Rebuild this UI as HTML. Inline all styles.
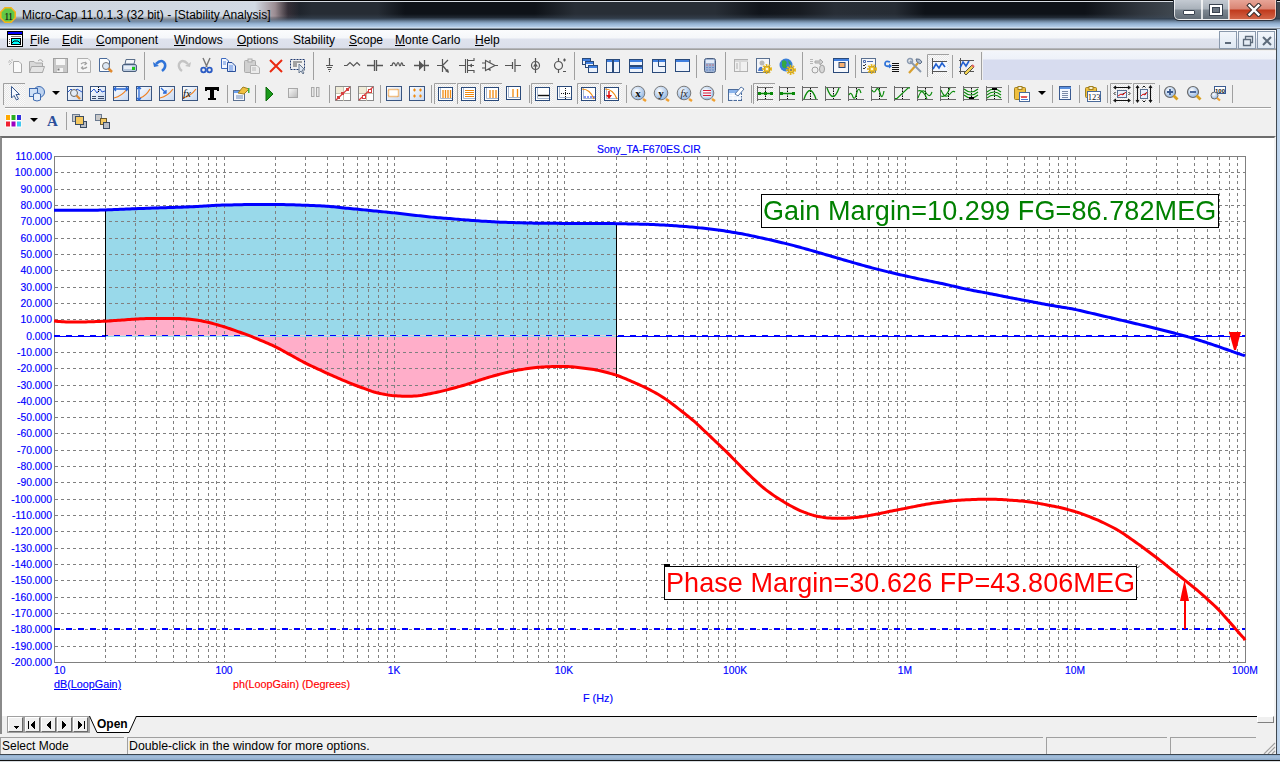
<!DOCTYPE html><html><head><meta charset="utf-8"><style>
*{margin:0;padding:0;box-sizing:border-box}
html,body{width:1280px;height:762px;overflow:hidden;background:#f0f0f0;font-family:"Liberation Sans",sans-serif;position:relative}
.t{position:absolute;white-space:pre;line-height:1}
.b{-webkit-text-stroke:0.15px currentColor}
</style></head><body>
<div style="position:absolute;left:0;top:0;width:1280px;height:30px;background:linear-gradient(#000 0,#000 1px,#d8dde4 1px,#d8dde4 2px,#1e232a 2px,#13171d 12px,#10141a 17px,#5a7088 21px,#a9c3de 25px,#b9d1ea 27px,#e8f0f8 28px,#2a3440 29px,#2a3440 30px)"></div>
<div style="position:absolute;left:0;top:2px;width:1280px;height:16px;background:linear-gradient(90deg,#141820 280px,#262c34 312px,#262c34 378px,#0e1218 405px,#0e1218 535px,#282e36 575px,#282e36 715px,#10141a 760px,#181c22 800px,#282e36 835px,#262c34 895px,#0e1218 925px,#0e1218 1085px,#30363e 1140px,#404850 1175px)"></div>
<div style="position:absolute;left:0;top:14px;width:1280px;height:14px;background:linear-gradient(rgba(30,35,42,0) 0,rgba(60,75,92,0.6) 5px,rgba(150,180,212,1) 10px,#b5cde8 13px,#dce8f4 14px)"></div>
<div style="position:absolute;left:0;top:2px;width:300px;height:20px;background:linear-gradient(90deg,rgba(204,212,222,1) 0,rgba(210,218,228,1) 255px,rgba(190,170,175,0.8) 275px,rgba(120,90,100,0.3) 288px,rgba(60,60,70,0) 300px);-webkit-mask-image:linear-gradient(#000 0,#000 14px,rgba(0,0,0,0) 20px)"></div>
<svg width="17" height="17" style="position:absolute;left:0;top:7px"><polygon points="5,0.8 11,0.8 15.2,5 15.2,11 11,15.2 5,15.2 0.8,11 0.8,5" fill="#62c846" stroke="#f4b41c" stroke-width="1.6"/><text x="8" y="12.5" font-family="Liberation Serif" font-size="11" text-anchor="middle" fill="#111" letter-spacing="-1.2">11</text></svg>
<div class="t" style="left:22px;top:9px;font-size:12px;color:#000">Micro-Cap 11.0.1.3 (32 bit) - [Stability Analysis]</div>
<div style="position:absolute;left:1173px;top:0;width:104px;height:21px;border:1px solid #2c3440;border-top:none;border-radius:0 0 6px 6px;background:#2c3440"></div>
<div style="position:absolute;left:1174px;top:0;width:28px;height:20px;border:1px solid rgba(255,255,255,0.75);border-top:none;border-radius:0 0 0 5px;background:linear-gradient(#c4cad2 0,#a9b1ba 9px,#7d8791 10px,#5f6973 20px)"></div>
<div style="position:absolute;left:1202px;top:0;width:27px;height:20px;border:1px solid rgba(255,255,255,0.75);border-top:none;background:linear-gradient(#c4cad2 0,#a9b1ba 9px,#7d8791 10px,#5f6973 20px)"></div>
<div style="position:absolute;left:1229px;top:0;width:47px;height:20px;border:1px solid rgba(255,220,210,0.75);border-top:none;border-radius:0 0 5px 0;background:linear-gradient(#e7a597 0,#d98473 9px,#c0391c 10px,#d4694c 20px)"></div>
<div style="position:absolute;left:1183px;top:10px;width:12px;height:5px;background:#fff;border:1px solid #3a4350;border-radius:1px"></div>
<div style="position:absolute;left:1210px;top:5px;width:12px;height:10px;border:2px solid #fff;border-top-width:2px;box-shadow:0 0 0 1px #3a4350, inset 0 0 0 1px #3a4350;background:#6a7480"></div>
<svg width="16" height="14" style="position:absolute;left:1246px;top:3px"><path d="M3.5,2.5 L12.5,11.5 M12.5,2.5 L3.5,11.5" stroke="#3a3030" stroke-width="4.5" stroke-linecap="square"/><path d="M3.5,2.5 L12.5,11.5 M12.5,2.5 L3.5,11.5" stroke="#fff" stroke-width="2.4" stroke-linecap="square"/></svg>
<div style="position:absolute;left:0;top:30px;width:1277px;height:19px;background:linear-gradient(#fbfcfd 0,#f5f7fa 8px,#dfe3ee 9px,#dadeea 19px)"></div>
<div style="position:absolute;left:0;top:48px;width:1277px;height:2px;background:linear-gradient(#c6c9d2 0,#a0a0a0 1px)"></div>
<div style="position:absolute;left:1276px;top:29px;width:4px;height:733px;background:linear-gradient(90deg,#404850 0,#404850 1px,#b8d0ea 1px,#c6daf0)"></div>
<svg width="17" height="17" style="position:absolute;left:7px;top:31px" shape-rendering="crispEdges"><rect x="0" y="0" width="16" height="16" fill="#000"/><rect x="1" y="1" width="14" height="2" fill="#0000ff"/><rect x="1" y="4" width="14" height="11" fill="#fff"/><rect x="4" y="5" width="10" height="1" fill="#777"/><rect x="2" y="8" width="1" height="1" fill="#555"/><rect x="2" y="10" width="1" height="1" fill="#555"/><rect x="2" y="12" width="1" height="1" fill="#555"/><rect x="4" y="7" width="10" height="7" fill="#000"/><rect x="5" y="8" width="8" height="5" fill="#00ffff"/><path d="M5,12 L7,10 H11 L13,12" stroke="#000" fill="none" shape-rendering="auto"/></svg>
<div class="t" style="left:30px;top:34px;font-size:12px;color:#000"><span style="text-decoration:underline">F</span>ile</div>
<div class="t" style="left:62px;top:34px;font-size:12px;color:#000"><span style="text-decoration:underline">E</span>dit</div>
<div class="t" style="left:96px;top:34px;font-size:12px;color:#000"><span style="text-decoration:underline">C</span>omponent</div>
<div class="t" style="left:174px;top:34px;font-size:12px;color:#000"><span style="text-decoration:underline">W</span>indows</div>
<div class="t" style="left:237px;top:34px;font-size:12px;color:#000"><span style="text-decoration:underline">O</span>ptions</div>
<div class="t" style="left:293px;top:34px;font-size:12px;color:#000">Stability</div>
<div class="t" style="left:349px;top:34px;font-size:12px;color:#000"><span style="text-decoration:underline">S</span>cope</div>
<div class="t" style="left:395px;top:34px;font-size:12px;color:#000"><span style="text-decoration:underline">M</span>onte Carlo</div>
<div class="t" style="left:475px;top:34px;font-size:12px;color:#000"><span style="text-decoration:underline">H</span>elp</div>
<div style="position:absolute;left:1219px;top:31px;width:18px;height:18px;border:1px solid #8a99ac;background:linear-gradient(#f2f6fb,#dfe8f3)"></div>
<div style="position:absolute;left:1238px;top:31px;width:18px;height:18px;border:1px solid #8a99ac;background:linear-gradient(#f2f6fb,#dfe8f3)"></div>
<div style="position:absolute;left:1257px;top:31px;width:18px;height:18px;border:1px solid #8a99ac;background:linear-gradient(#f2f6fb,#dfe8f3)"></div>
<div style="position:absolute;left:1225px;top:42px;width:6px;height:2px;background:#5c6a7a"></div>
<svg width="12" height="12" style="position:absolute;left:1242px;top:35px"><path d="M3.5,4.5 V1.5 H10.5 V7.5 H8 M1.5,4.5 H8.5 V10.5 H1.5 Z" stroke="#5c6a7a" stroke-width="1.3" fill="none"/></svg>
<svg width="12" height="12" style="position:absolute;left:1261px;top:35px"><path d="M2,2 L10,10 M10,2 L2,10" stroke="#5c6a7a" stroke-width="2"/></svg>
<div style="position:absolute;left:983px;top:51px;width:293px;height:29px;background:linear-gradient(#f3f5fb 0,#eef1f9 8px,#d7dcef 9px,#d7dcef 29px)"></div>
<div style="position:absolute;left:5px;top:107px;width:1266px;height:2px;background:linear-gradient(#a0a0a0 0,#a0a0a0 1px,#fff 1px)"></div>
<svg width="1280" height="136" style="position:absolute;left:0;top:0"><defs>
<pattern id="chk" width="2" height="2" patternUnits="userSpaceOnUse"><rect width="2" height="2" fill="#fafafa"/><rect width="1" height="1" fill="#e8e8e8"/><rect x="1" y="1" width="1" height="1" fill="#e8e8e8"/></pattern>
<linearGradient id="gb" x1="0" y1="0" x2="1" y2="1"><stop offset="0" stop-color="#ffffff"/><stop offset="1" stop-color="#c8d8f0"/></linearGradient>
<linearGradient id="gray" x1="0" y1="0" x2="1" y2="1"><stop offset="0" stop-color="#fafafa"/><stop offset="1" stop-color="#b8b8b8"/></linearGradient>
<radialGradient id="rg" cx="0.4" cy="0.35" r="0.7"><stop offset="0" stop-color="#ffffff"/><stop offset="1" stop-color="#8ab0e0"/></radialGradient>
</defs><g transform="translate(8,58)"><path d="M5.5,3.5 H11 L13.5,6 V14.5 H5.5 Z" fill="#fafafa" stroke="#a8a8a8"/><path d="M1,2 L4,5 M4,1 L4,3 M0,4 H2 M1,7 L3,5" stroke="#c0c0c0"/></g>
<g transform="translate(29,58)"><path d="M0.5,3.5 H5 L6.5,5 H13.5 V14.5 H0.5 Z" fill="#d8d8d8" stroke="#a8a8a8"/><path d="M2.5,8.5 H15.5 L13.5,14.5 H0.5 Z" fill="#e4e4e4" stroke="#a8a8a8"/><path d="M9,3 Q12,0 14,4" stroke="#a8a8a8" fill="none"/></g>
<g transform="translate(53,58)"><rect x="0.5" y="0.5" width="14" height="14" fill="#c8c8c8" stroke="#a0a0a0"/><rect x="3" y="1" width="9" height="6" fill="#f6f6f6"/><rect x="4" y="10" width="6" height="4" fill="#f4f4f4"/><rect x="4.5" y="10.5" width="2" height="2" fill="#777"/></g>
<g transform="translate(77,58)"><path d="M0.5,0.5 H11 L13.5,3 V14.5 H0.5 Z" fill="#f6f6f6" stroke="#b0b0b0"/><path d="M4,6 Q6,4 9,5 M8,4 L9.5,5.5 L7.5,7 M10,9 Q8,11 5,10 M6,8.5 L4.5,10 L6.5,11.5" stroke="#a0a0a0" fill="none" stroke-width="1.2"/></g>
<g transform="translate(99,58)"><path d="M0.5,0.5 H8 L10.5,3 V13.5 H0.5 Z" fill="#fbfdff" stroke="#4a6a9a"/><circle cx="7" cy="8" r="3.5" fill="#dce8f6" stroke="#777"/><path d="M9.5,10.5 L13,14" stroke="#e08a30" stroke-width="2.5"/></g>
<g transform="translate(122,58)"><path d="M4,1.5 H13 L12,6 H3 Z" fill="#f4f6fa" stroke="#5a6e8a"/><rect x="0.5" y="6.5" width="14" height="7" rx="1.5" fill="#b9c9de" stroke="#4b5f7d"/><rect x="2" y="8" width="8" height="3" fill="#e8eef6"/><rect x="10" y="9" width="3" height="3" fill="#1bc51b"/></g>
<rect x="144" y="52" width="1" height="28" fill="#a0a0a0"/>
<g transform="translate(153,58)"><path d="M3,6 Q9,0 12,6 Q13,10 9,13" stroke="#2f73d8" stroke-width="2.6" fill="none"/><path d="M0,4 L1,9 L6,8 Z" fill="#2f73d8"/></g>
<g transform="translate(177,58)"><path d="M11,6 Q5,0 2,6 Q1,10 5,13" stroke="#c4c4c4" stroke-width="2.4" fill="none"/><path d="M14,4 L13,9 L8,8 Z" fill="#c4c4c4"/></g>
<g transform="translate(200,58)"><path d="M3,0 L7,9 M10,0 L6,9" stroke="#777" stroke-width="1.4"/><circle cx="3.5" cy="12" r="2.3" fill="none" stroke="#2a5bc4" stroke-width="1.8"/><circle cx="9.5" cy="12" r="2.3" fill="none" stroke="#2a5bc4" stroke-width="1.8"/></g>
<g transform="translate(221,58)"><path d="M0.5,0.5 H5 L7.5,3 V10.5 H0.5 Z" fill="#f2f6ff" stroke="#3c6ac0"/><path d="M6.5,4.5 H11 L14.5,8 V13.5 H6.5 Z" fill="#dfe9fb" stroke="#2a4f9a"/><path d="M2,4 H5 M2,6 H5 M8,8 H12 M8,10 H12 M8,12 H12" stroke="#5b8ae0"/></g>
<g transform="translate(244,58)"><rect x="0.5" y="2.5" width="11" height="12" rx="1" fill="#d0d0d0" stroke="#ababab"/><rect x="4" y="1" width="4" height="3" fill="#e8e8e8" stroke="#ababab"/><path d="M6.5,7.5 H13 L15.5,10 V15.5 H6.5 Z" fill="#ececec" stroke="#b0b0b0"/><path d="M8,10 H12 M8,12 H12" stroke="#b8b8b8"/></g>
<g transform="translate(269,58)"><path d="M1,2 L13,14 M13,2 L1,14" stroke="#ea2a10" stroke-width="2"/></g>
<g transform="translate(290,58)"><rect x="0.5" y="1.5" width="14" height="10" fill="none" stroke="#203a70" stroke-dasharray="2 1"/><path d="M3,4 H12 M3,6 H7 M3,8 H7" stroke="#555"/><path d="M9,6 L9,15 L11,13 L13,16 L14,15 L12,12 L15,12 Z" fill="#dfe7f3" stroke="#6a7a90"/></g>
<rect x="313" y="52" width="1" height="28" fill="#a0a0a0"/>
<g transform="translate(326,58)"><path d="M3.5,0 V7 M0,7.5 H7 M1,9.5 H6 M2,11.5 H5 M3,13.5 H4" stroke="#555" stroke-width="1.2"/></g>
<g transform="translate(344,58)"><path d="M0,7.5 H3 L6,4.5 L9.5,8 L13,4.5 L16,7.5" stroke="#555" stroke-width="1.2" fill="none"/></g>
<g transform="translate(367,58)"><path d="M0,7.5 H7 M10,7.5 H16 M7.5,2 V13 M9.5,2 V13" stroke="#555" stroke-width="1.3"/></g>
<g transform="translate(390,58)"><path d="M0,7.5 H2 Q3,3 5,6 Q6,10 7,6 Q8,3 9,6 Q10,10 11,6 Q12,3 13,7.5 H15" stroke="#555" stroke-width="1.2" fill="none"/></g>
<g transform="translate(414,58)"><path d="M0,7.5 H15 M10.5,2 V13" stroke="#555" stroke-width="1.3"/><path d="M5,2.5 L10,7.5 L5,12.5 Z" fill="#555"/></g>
<g transform="translate(437,58)"><path d="M0,7.5 H5 M5.5,1 V14 M6,7 L11,2 M6,8 L11,14" stroke="#555" stroke-width="1.2"/><path d="M8,13 L12,15 L11,11 Z" fill="#555"/></g>
<g transform="translate(459,58)"><path d="M0,7.5 H6 M6.5,1 V15 M8.5,1 V15 M9,2.5 H15 V0 M9,7.5 H15 M9,12.5 H15 V15" stroke="#555" stroke-width="1.1" fill="none"/><path d="M10,7.5 L13,5.5 L13,9.5 Z" fill="#555"/></g>
<g transform="translate(482,58)"><path d="M3.5,2.5 V12.5 L13,7.5 Z M0,5 H3 M0,10 H3 M8,2 V5 M8,10 V13 M13,7.5 H16" stroke="#555" stroke-width="1.1" fill="none"/></g>
<g transform="translate(505,58)"><path d="M0,7.5 H7 M10,7.5 H16 M7.5,4 V11 M10,1 V14" stroke="#555" stroke-width="1.2"/></g>
<g transform="translate(531,58)"><circle cx="4.5" cy="7.5" r="4" fill="none" stroke="#555" stroke-width="1.2"/><path d="M4.5,0 V15" stroke="#555" stroke-width="1.2"/><path d="M2,8.5 L4.5,5 L7,8.5 Z" fill="#555"/></g>
<g transform="translate(554,58)"><circle cx="4.5" cy="7.5" r="4" fill="none" stroke="#555" stroke-width="1.2"/><path d="M4.5,0 V3 M4.5,12 V15 M9,2 H12 M10.5,0.5 V3.5 M9,13.5 H12" stroke="#555" stroke-width="1.2"/></g>
<rect x="574" y="52" width="1" height="28" fill="#a0a0a0"/>
<g transform="translate(582,58)"><rect x="0.5" y="0.5" width="8" height="6" fill="#eef3fb" stroke="#2a4a7a"/><rect x="1" y="1" width="7" height="2" fill="#3f7fe0"/><rect x="3.5" y="3.5" width="8" height="6" fill="#eef3fb" stroke="#2a4a7a"/><rect x="4" y="4" width="7" height="2" fill="#3f7fe0"/><rect x="6.5" y="7.5" width="9" height="7" fill="#eef3fb" stroke="#2a4a7a"/><rect x="7" y="8" width="8" height="2" fill="#3f7fe0"/></g>
<g transform="translate(606,58)"><rect x="0.5" y="1.5" width="6" height="13" fill="#eef3fb" stroke="#2a4a7a"/><rect x="1" y="2" width="5" height="2" fill="#3f7fe0"/><rect x="7.5" y="1.5" width="6" height="13" fill="#eef3fb" stroke="#2a4a7a"/><rect x="8" y="2" width="5" height="2" fill="#3f7fe0"/></g>
<g transform="translate(629,58)"><rect x="0.5" y="1.5" width="13" height="6" fill="#eef3fb" stroke="#2a4a7a"/><rect x="1" y="2" width="12" height="2" fill="#3f7fe0"/><rect x="0.5" y="8.5" width="13" height="6" fill="#eef3fb" stroke="#2a4a7a"/><rect x="1" y="9" width="12" height="2" fill="#3f7fe0"/></g>
<g transform="translate(652,58)"><rect x="0.5" y="1.5" width="13" height="13" fill="#eef3fb" stroke="#2a4a7a"/><rect x="1" y="2" width="12" height="2" fill="#3f7fe0"/><path d="M6.5,1 V8.5 H13.5" stroke="#2a4a7a" fill="none"/><rect x="7" y="2" width="6" height="2" fill="#3f7fe0"/></g>
<g transform="translate(675,58)"><rect x="0.5" y="1.5" width="14" height="12" fill="#eef3fb" stroke="#2a4a7a"/><rect x="1" y="2" width="13" height="2" fill="#3f7fe0"/></g>
<rect x="696" y="55" width="1" height="23" fill="#a0a0a0"/>
<g transform="translate(704,58)"><rect x="0.5" y="0.5" width="11" height="14" rx="2" fill="#9fb4d4" stroke="#4a5e80"/><rect x="2" y="2" width="8" height="3" fill="#e4ecf8"/><path d="M2.5,7 h1 m2,0 h1 m2,0 h1" stroke="#d03030"/><path d="M2.5,9.5 h1 m2,0 h1 m2,0 h1 M2.5,12 h1 m2,0 h1 m2,0 h1" stroke="#3a66c4"/></g>
<rect x="725" y="52" width="1" height="28" fill="#a0a0a0"/>
<g transform="translate(734,58)"><rect x="0.5" y="1.5" width="13" height="12" fill="#f0f0f0" stroke="#b0b0b0"/><rect x="1" y="2" width="13" height="2" fill="#d8d8d8"/><rect x="5.5" y="4" width="1" height="9" fill="#c0c0c0"/><path d="M2,6 H4 M2,8 H4 M2,10 H4" stroke="#b0b0b0"/></g>
<g transform="translate(756,58)"><rect x="0.5" y="0.5" width="13" height="14" fill="#f4f6fa" stroke="#5a7090"/><circle cx="6" cy="5" r="2.5" fill="#b8b8b8"/><path d="M2,13 Q3,8 6,9 L7,13 Z" fill="#4a7ad0"/><circle cx="11" cy="11" r="3.8" fill="none" stroke="#e8b820" stroke-width="2.4" stroke-dasharray="1.6 1.1"/><circle cx="11" cy="11" r="2.9" fill="#f4c830" stroke="#a88010" stroke-width="0.6"/><circle cx="11" cy="11" r="1.1" fill="#fff"/></g>
<g transform="translate(779,58)"><circle cx="7" cy="7" r="6.5" fill="#3a7fd8"/><path d="M3,3 Q7,1 8,5 Q6,7 8,9 Q5,12 3,8 Z" fill="#35a845"/><path d="M9,2 Q12,4 12,7 L10,6 Z" fill="#35a845"/><circle cx="12" cy="12" r="3.8" fill="none" stroke="#e8b820" stroke-width="2.4" stroke-dasharray="1.6 1.1"/><circle cx="12" cy="12" r="2.9" fill="#f4c830" stroke="#a88010" stroke-width="0.6"/><circle cx="12" cy="12" r="1.1" fill="#777"/></g>
<rect x="802" y="52" width="1" height="28" fill="#a0a0a0"/>
<g transform="translate(810,58)"><path d="M0,1.5 H3 M0,3.5 H3 M0,5.5 H3" stroke="#a8a8a8" stroke-width="0.8"/><path d="M5,3 H10 V1 L13,4 L10,7 V5 H5 Z" fill="#d0d0d0" stroke="#a8a8a8"/><circle cx="5" cy="12" r="3" fill="#f0f0f0" stroke="#a0a0a0"/><ellipse cx="12" cy="11" rx="2.5" ry="4" fill="#d8d8d8" stroke="#a0a0a0"/></g>
<g transform="translate(833,58)"><rect x="0.5" y="0.5" width="15" height="14" fill="#f6f8fc" stroke="#2a4a7a"/><rect x="1" y="1" width="15" height="2" fill="#3f7fe0"/><rect x="6" y="4.5" width="6" height="5" fill="#f7b070" stroke="#2a4a7a"/></g>
<rect x="855" y="55" width="1" height="23" fill="#a0a0a0"/>
<g transform="translate(861,58)"><rect x="0.5" y="0.5" width="14" height="14" fill="#f4f6fa" stroke="#5a7090"/><path d="M2.5,2.5 h2 v2 h-2 z M6,3.5 H12" stroke="#4a6ab0" fill="none"/><path d="M2,7 L3,8 L5,6 M2,10 L3,11 L5,9" stroke="#333" fill="none"/><circle cx="11" cy="11" r="3.8" fill="none" stroke="#e8b820" stroke-width="2.4" stroke-dasharray="1.6 1.1"/><circle cx="11" cy="11" r="2.9" fill="#f4c830" stroke="#a88010" stroke-width="0.6"/><circle cx="11" cy="11" r="1.1" fill="#fff"/></g>
<g transform="translate(884,58)"><path d="M6,4 Q1,2 1,6 Q1,9 6,8" stroke="#2f73d8" stroke-width="1.8" fill="none"/><path d="M5,5.5 L8,8 L5,10.5 Z" fill="#2f73d8"/><path d="M8,5.5 H15 M8,7.5 H15 M8,9.5 H15 M8,11.5 H15 M8,13.5 H15" stroke="#111" stroke-width="1.1"/></g>
<g transform="translate(907,58)"><path d="M2,15 L11,5" stroke="#d8a030" stroke-width="2.2"/><path d="M3,3 L14,14" stroke="#8a9ab0" stroke-width="2"/><path d="M9,1 Q13,0 15,4 L13,6 L10,4 Z" fill="#a8b8cc" stroke="#607088"/><circle cx="3" cy="3" r="2.5" fill="none" stroke="#8a9ab0" stroke-width="1.5"/></g>
<rect x="927" y="54" width="22" height="23" fill="url(#chk)"/>
<path d="M927.5,77 V54.5 H949" stroke="#a0a0a0" fill="none"/>
<g transform="translate(931,58)"><path d="M1.5,0 V16 M1,3.5 H16 M1,13.5 H16" stroke="#555"/><rect x="2" y="4" width="14" height="9" fill="#f4f8ff"/><path d="M2,11 L5,6 L8,10 L11,5 L14,9" stroke="#2060d0" stroke-width="1.6" fill="none"/></g>
<rect x="952" y="55" width="1" height="23" fill="#a0a0a0"/>
<g transform="translate(958,58)"><path d="M2.5,0 V16 M1,2.5 H16 M1,13.5 H16" stroke="#555"/><path d="M2,10 L5,4 L8,8 L11,3" stroke="#2060d0" stroke-width="1.6" fill="none"/><path d="M6,15 L14,7 L16,9 L8,17 Z" fill="#f0d050" stroke="#554"/><path d="M14,7 L16,9" stroke="#e06060" stroke-width="2"/></g>
<rect x="981" y="52" width="1" height="28" fill="#a0a0a0"/>
<rect x="3" y="83" width="22" height="22" fill="url(#chk)"/>
<path d="M3.5,105 V83.5 H25" stroke="#a0a0a0" fill="none"/>
<g transform="translate(11,86)"><path d="M0.5,0.5 L0.5,12 L3,9.5 L5.5,14 L7.5,13 L5,8.5 L8.5,8.5 Z" fill="#f4f8ff" stroke="#3a5a90"/></g>
<g transform="translate(29,86)"><circle cx="10" cy="6" r="5.5" fill="#bcd2f0" stroke="#3d6ab0"/><rect x="0.5" y="2.5" width="8" height="8" fill="#cfe0f6" stroke="#3d6ab0"/><path d="M4.5,8 V14 Q8,16 11.5,14 V8 Q8,6 4.5,8 Z" fill="#e6eefa" stroke="#3d6ab0"/></g>
<g transform="translate(52,86)"><path d="M0,5 H8 L4,9 Z" fill="#000"/></g>
<g transform="translate(67,86)"><rect x="0.5" y="0.5" width="15" height="14" fill="url(#gb)" stroke="#3a5580"/><path d="M1,6 L4,3 L7,6 L10,3 L15,6" stroke="#2a5ad0" fill="none"/><circle cx="7" cy="7" r="3.5" fill="#e4ecf6" stroke="#666"/><path d="M9.5,9.5 L13,13" stroke="#e08a30" stroke-width="2.2"/></g>
<g transform="translate(90,86)"><rect x="0.5" y="0.5" width="15" height="14" fill="url(#gb)" stroke="#3a5580"/><path d="M1,6 L4,3 L7,7 L10,3 L12,6 L15,5" stroke="#2a5ad0" fill="none"/><path d="M8.5,1 V7" stroke="#000" stroke-dasharray="1 1"/><path d="M2,10.5 H6 M8,10.5 H14 M2,12.5 H6 M8,12.5 H14" stroke="#3a4a6a"/></g>
<g transform="translate(113,86)"><rect x="0.5" y="0.5" width="15" height="14" fill="url(#gb)" stroke="#3a5580"/><path d="M1,12 Q9,10 14,3" stroke="#f08020" fill="none" stroke-width="1.2"/><path d="M1,3 H15 M3,1 L1,3 L3,5 M13,1 L15,3 L13,5" stroke="#2a6ad8" stroke-width="1.3" fill="none"/></g>
<g transform="translate(136,86)"><rect x="0.5" y="0.5" width="15" height="14" fill="url(#gb)" stroke="#3a5580"/><path d="M4,12 Q10,10 14,3" stroke="#f08020" fill="none" stroke-width="1.2"/><path d="M3,1 V14 M1,3 L3,1 L5,3 M1,12 L3,14 L5,12" stroke="#2a6ad8" stroke-width="1.3" fill="none"/></g>
<g transform="translate(159,86)"><rect x="0.5" y="0.5" width="15" height="14" fill="url(#gb)" stroke="#3a5580"/><path d="M1,12 Q9,10 14,3" stroke="#f08020" fill="none" stroke-width="1.2"/><path d="M2,2 L7,7 M7,4 V7 H4" stroke="#2a6ad8" stroke-width="1.3" fill="none"/></g>
<g transform="translate(182,86)"><rect x="0.5" y="0.5" width="15" height="14" fill="url(#gb)" stroke="#3a5580"/><path d="M1,12 Q9,10 14,3" stroke="#f08020" fill="none" stroke-width="1.2"/><text x="1" y="11" font-family="Liberation Serif" font-style="italic" font-size="11" fill="#111">fx</text></g>
<g transform="translate(205,86)"><path d="M0,1 H14 V5 H12 V4 H9 V12 H11 V14 H3 V12 H5 V4 H2 V5 H0 Z" fill="#000"/></g>
<rect x="227" y="85" width="1" height="18" fill="#a0a0a0"/>
<g transform="translate(233,86)"><rect x="0.5" y="4.5" width="11" height="10" fill="#f6f8fc" stroke="#5a7090"/><rect x="1" y="5" width="11" height="2" fill="#6aa0f0"/><path d="M3,10 H10 M3,12 H10" stroke="#6a8ab8"/><path d="M5,7 L10,1 L16,3 L11,8 Z" fill="#f0c040" stroke="#a08020"/><rect x="15" y="2" width="1.5" height="5" fill="#3ab040"/></g>
<rect x="255" y="85" width="1" height="18" fill="#a0a0a0"/>
<g transform="translate(265,86)"><path d="M1,1 L8,8 L1,15 Z" fill="#1a9a1a" stroke="#0c6a0c"/></g>
<g transform="translate(288,86)"><rect x="0.5" y="2.5" width="9" height="9" fill="url(#gray)" stroke="#a8a8a8"/></g>
<g transform="translate(311,86)"><rect x="0.5" y="1.5" width="2.5" height="9" fill="#e8e8e8" stroke="#a8a8a8"/><rect x="5.5" y="1.5" width="2.5" height="9" fill="#e8e8e8" stroke="#a8a8a8"/></g>
<rect x="329" y="85" width="1" height="18" fill="#a0a0a0"/>
<g transform="translate(335,86)"><rect x="0.5" y="0.5" width="15" height="14" fill="#fff" stroke="#8a8a8a"/><rect x="1" y="1" width="7" height="6.5" fill="#f0ecd8"/><path d="M8.5,1 V15 M1,7.5 H15" stroke="#c8c4b0"/><path d="M1,14 L15,1" stroke="#d84040" stroke-width="1.2"/><rect x="2" y="10" width="3" height="3" fill="#d84040"/><rect x="6" y="6" width="3" height="3" fill="#d84040"/><rect x="11" y="2" width="3" height="3" fill="#d84040"/></g>
<g transform="translate(358,86)"><rect x="0.5" y="0.5" width="15" height="14" fill="#fff" stroke="#8a8a8a"/><rect x="1" y="1" width="7" height="6.5" fill="#f0ecd8"/><path d="M8.5,1 V15 M1,7.5 H15" stroke="#c8c4b0"/><path d="M1,14 L15,1" stroke="#d84040" stroke-width="1.2"/><rect x="4.5" y="9.5" width="3" height="3" fill="#fff" stroke="#d84040"/><rect x="10.5" y="3.5" width="3" height="3" fill="#fff" stroke="#d84040"/></g>
<rect x="380" y="85" width="1" height="18" fill="#a0a0a0"/>
<g transform="translate(386,86)"><rect x="0.5" y="0.5" width="15" height="14" fill="url(#gb)" stroke="#3a5580"/><rect x="2.5" y="3.5" width="10" height="7" fill="#fff" stroke="#f08a10" stroke-width="1.5" stroke-dasharray="1 1"/></g>
<g transform="translate(409,86)"><rect x="0.5" y="0.5" width="15" height="14" fill="url(#gb)" stroke="#3a5580"/><path d="M4,4 h3 M5.5,2.5 v3 M10,4 h3 M11.5,2.5 v3 M4,10 h3 M5.5,8.5 v3 M10,10 h3 M11.5,8.5 v3" stroke="#f08a10" stroke-width="1.2"/></g>
<rect x="431" y="85" width="1" height="18" fill="#a0a0a0"/>
<rect x="434" y="83" width="22" height="21" fill="url(#chk)"/>
<path d="M434.5,104 V83.5 H456" stroke="#a0a0a0" fill="none"/>
<rect x="457" y="83" width="22" height="21" fill="url(#chk)"/>
<path d="M457.5,104 V83.5 H479" stroke="#a0a0a0" fill="none"/>
<rect x="480" y="83" width="22" height="21" fill="url(#chk)"/>
<path d="M480.5,104 V83.5 H502" stroke="#a0a0a0" fill="none"/>
<g transform="translate(438,87)"><rect x="0.5" y="0.5" width="14" height="13" fill="#fff" stroke="#2a4a7a"/><path d="M2.5,1 V11.5 H14" stroke="#a8b8d0" fill="none"/><path d="M5,3 V11 M7.5,3 V11 M10,3 V11 M12.5,3 V11" stroke="#f08a10" stroke-width="1.3"/></g>
<g transform="translate(461,87)"><rect x="0.5" y="0.5" width="14" height="13" fill="#fff" stroke="#2a4a7a"/><path d="M2.5,1 V11.5 H14" stroke="#a8b8d0" fill="none"/><path d="M4,3.5 H13 M4,5.5 H13 M4,7.5 H13 M4,9.5 H13" stroke="#f08a10" stroke-width="1.2"/></g>
<g transform="translate(484,87)"><rect x="0.5" y="0.5" width="14" height="13" fill="#fff" stroke="#2a4a7a"/><path d="M2.5,1 V11.5 H14" stroke="#a8b8d0" fill="none"/><path d="M6,3 V11 M9,3 V11 M12,3 V11" stroke="#f08a10" stroke-width="1.3"/></g>
<g transform="translate(506,86)"><rect x="0.5" y="0.5" width="14" height="13" fill="#fff" stroke="#2a4a7a"/><path d="M2.5,1 V11.5 H14" stroke="#a8b8d0" fill="none"/><path d="M7,3 V11 M11.5,3 V11" stroke="#f08a10" stroke-width="1.3"/></g>
<rect x="529" y="85" width="1" height="18" fill="#a0a0a0"/>
<rect x="531" y="83" width="22" height="21" fill="url(#chk)"/>
<path d="M531.5,104 V83.5 H553" stroke="#a0a0a0" fill="none"/>
<g transform="translate(535,87)"><rect x="0.5" y="0.5" width="14" height="13" fill="#fff" stroke="#2a4a7a"/><path d="M2.5,1 V11.5 H14" stroke="#a8b8d0" fill="none"/><path d="M3,8.5 H14" stroke="#111" stroke-width="1.4"/></g>
<g transform="translate(557,86)"><rect x="0.5" y="0.5" width="14" height="13" fill="#fff" stroke="#2a4a7a"/><path d="M2.5,1 V11.5 H14" stroke="#a8b8d0" fill="none"/><path d="M4,7.5 H14 M8.5,2 V13" stroke="#111" stroke-dasharray="1 1"/></g>
<rect x="577" y="83" width="22" height="21" fill="url(#chk)"/>
<path d="M577.5,104 V83.5 H599" stroke="#a0a0a0" fill="none"/>
<rect x="600" y="83" width="22" height="21" fill="url(#chk)"/>
<path d="M600.5,104 V83.5 H622" stroke="#a0a0a0" fill="none"/>
<g transform="translate(581,87)"><rect x="0.5" y="0.5" width="14" height="13" fill="#fff" stroke="#2a4a7a"/><path d="M2.5,1 V11.5 H14" stroke="#a8b8d0" fill="none"/><path d="M1,2 Q9,2 13,12" stroke="#f08a10" stroke-width="1.2" fill="none"/><path d="M3,10 H14" stroke="#1030f0" stroke-width="1.2" stroke-dasharray="2 1"/></g>
<g transform="translate(604,87)"><rect x="0.5" y="0.5" width="14" height="13" fill="#fff" stroke="#2a4a7a"/><path d="M2.5,1 V11.5 H14" stroke="#a8b8d0" fill="none"/><path d="M1,2 Q9,2 13,12" stroke="#f08a10" stroke-width="1.2" fill="none"/><path d="M5,4 V10" stroke="#e01010" stroke-width="1.5"/><path d="M2,8 L5,12 L8,8 Z" fill="#e01010"/></g>
<rect x="626" y="85" width="1" height="18" fill="#a0a0a0"/>
<g transform="translate(631,86)"><circle cx="7" cy="7" r="6.8" fill="url(#rg)" stroke="#7a7a7a"/><text x="7" y="10.5" font-family="Liberation Serif" font-weight="bold" font-size="11" text-anchor="middle" fill="#111">x</text><path d="M12,13 L15,15" stroke="#f0a030" stroke-width="2.5"/></g>
<g transform="translate(654,86)"><circle cx="7" cy="7" r="6.8" fill="url(#rg)" stroke="#7a7a7a"/><text x="7" y="10.5" font-family="Liberation Serif" font-weight="bold" font-size="11" text-anchor="middle" fill="#111">y</text><path d="M12,13 L15,15" stroke="#f0a030" stroke-width="2.5"/></g>
<g transform="translate(677,86)"><circle cx="7" cy="7" r="6.8" fill="url(#rg)" stroke="#7a7a7a"/><text x="7" y="11" font-family="Liberation Serif" font-style="italic" font-size="10" text-anchor="middle" fill="#222">fx</text><path d="M12,13 L15,15" stroke="#f0a030" stroke-width="2.5"/></g>
<g transform="translate(700,86)"><circle cx="7" cy="7" r="6.8" fill="url(#rg)" stroke="#7a7a7a"/><rect x="2.5" y="3.5" width="9" height="8" fill="#fff" opacity="0.6"/><path d="M3,4.5 H11 M3,7 H11 M3,9.5 H11" stroke="#d81838" stroke-width="1.1"/><path d="M12,13 L15,15" stroke="#f0a030" stroke-width="2.5"/></g>
<rect x="722" y="85" width="1" height="18" fill="#a0a0a0"/>
<g transform="translate(728,86)"><rect x="0.5" y="3.5" width="13" height="11" fill="#e8f0fb" stroke="#4a6a9a"/><rect x="1" y="4" width="13" height="3" fill="#8ab4ec"/><path d="M1,9.5 H14 M1,12 H14 M5,7 V15 M9.5,7 V15" stroke="#fff"/><path d="M7,8 L13,1 L16,3 L10,10 Z" fill="#fff" stroke="#5a7aa8"/></g>
<rect x="751" y="85" width="1" height="18" fill="#a0a0a0"/>
<rect x="753" y="83" width="22" height="21" fill="url(#chk)"/>
<path d="M753.5,104 V83.5 H775" stroke="#a0a0a0" fill="none"/>
<g transform="translate(757,86)"><path d="M0.5,0 V15 M0,1.5 H16 M0,13.5 H16" stroke="#6a6a6a"/><path d="M8.5,2 V13" stroke="#000" stroke-dasharray="1.5 1"/><path d="M1,7.5 H15" stroke="#0a8a0a" stroke-width="1.5"/><rect x="1" y="6" width="3" height="3" fill="#0a8a0a"/><rect x="7" y="6" width="3" height="3" fill="#0a8a0a"/><rect x="13" y="6" width="3" height="3" fill="#0a8a0a"/></g>
<g transform="translate(779,86)"><path d="M0.5,0 V15 M0,1.5 H16 M0,13.5 H16" stroke="#6a6a6a"/><path d="M8.5,2 V13" stroke="#000" stroke-dasharray="1.5 1"/><path d="M1,7.5 H15" stroke="#0a8a0a" stroke-width="1.5"/><rect x="1" y="6" width="3" height="3" fill="#0a8a0a"/><rect x="13" y="6" width="3" height="3" fill="#0a8a0a"/></g>
<g transform="translate(802,86)"><path d="M0.5,0 V15 M0,1.5 H16 M0,13.5 H16" stroke="#6a6a6a"/><path d="M8.5,2 V13" stroke="#000" stroke-dasharray="1.5 1"/><path d="M2,13 Q8,-4 14,13" stroke="#0a8a0a" stroke-width="1.3" fill="none"/></g>
<g transform="translate(825,86)"><path d="M0.5,0 V15 M0,1.5 H16 M0,13.5 H16" stroke="#6a6a6a"/><path d="M8.5,2 V13" stroke="#000" stroke-dasharray="1.5 1"/><path d="M2,2 Q8,19 14,2" stroke="#0a8a0a" stroke-width="1.3" fill="none"/></g>
<g transform="translate(848,86)"><path d="M0.5,0 V15 M0,1.5 H16 M0,13.5 H16" stroke="#6a6a6a"/><path d="M8.5,2 V13" stroke="#000" stroke-dasharray="1.5 1"/><path d="M1,9 Q3,5 5,11 Q7,15 9,6 Q11,0 13,7" stroke="#0a8a0a" stroke-width="1.2" fill="none"/></g>
<g transform="translate(871,86)"><path d="M0.5,0 V15 M0,1.5 H16 M0,13.5 H16" stroke="#6a6a6a"/><path d="M8.5,2 V13" stroke="#000" stroke-dasharray="1.5 1"/><path d="M1,4 Q3,8 5,4 Q7,0 9,7 Q11,15 13,5" stroke="#0a8a0a" stroke-width="1.2" fill="none"/></g>
<g transform="translate(894,86)"><path d="M0.5,0 V15 M0,1.5 H16 M0,13.5 H16" stroke="#6a6a6a"/><path d="M8.5,2 V13" stroke="#000" stroke-dasharray="1.5 1"/><path d="M1,12.5 H3 L14,2 H16" stroke="#0a8a0a" stroke-width="1.2" fill="none"/></g>
<g transform="translate(917,86)"><path d="M0.5,0 V15 M0,1.5 H16 M0,13.5 H16" stroke="#6a6a6a"/><path d="M8.5,2 V13" stroke="#000" stroke-dasharray="1.5 1"/><path d="M1,12 Q5,0 10,8 Q13,12 15,6 M1,5 Q6,3 10,13" stroke="#0a8a0a" stroke-width="1.1" fill="none"/></g>
<g transform="translate(940,86)"><path d="M0.5,0 V15 M0,1.5 H16 M0,13.5 H16" stroke="#6a6a6a"/><path d="M8.5,2 V13" stroke="#000" stroke-dasharray="1.5 1"/><path d="M1,4 Q5,14 10,8 Q13,4 15,6 M1,10 Q6,12 10,2" stroke="#0a8a0a" stroke-width="1.1" fill="none"/></g>
<g transform="translate(963,86)"><path d="M0.5,0 V15 M0,1.5 H16 M0,13.5 H16" stroke="#6a6a6a"/><path d="M8.5,2 V13" stroke="#000" stroke-dasharray="1.5 1"/><path d="M1,3 Q8,9 15,3 M1,6 Q8,12 15,6 M1,9 Q8,15 15,9" stroke="#0a8a0a" stroke-width="1.1" fill="none"/><rect x="6" y="11" width="5" height="2" fill="#000"/></g>
<g transform="translate(986,86)"><path d="M0.5,0 V15 M0,1.5 H16 M0,13.5 H16" stroke="#6a6a6a"/><path d="M8.5,2 V13" stroke="#000" stroke-dasharray="1.5 1"/><path d="M1,6 Q8,0 15,6 M1,9 Q8,3 15,9 M1,12 Q8,6 15,12" stroke="#0a8a0a" stroke-width="1.1" fill="none"/><rect x="6" y="2" width="5" height="2" fill="#000"/></g>
<rect x="1008" y="85" width="1" height="18" fill="#a0a0a0"/>
<g transform="translate(1014,86)"><rect x="0.5" y="1.5" width="11" height="12" rx="1" fill="#f0c040" stroke="#a08020"/><rect x="4" y="0.5" width="4" height="3" fill="#f8f0d0" stroke="#a08020"/><rect x="5.5" y="6.5" width="10" height="9" fill="#fff" stroke="#4a6a9a"/><path d="M7,10 L8,12 L9,10 L10,12 L11,10 L12,12 L13,10" stroke="#e03030" fill="none"/><path d="M7,13.5 H14" stroke="#4a7ad0"/></g>
<g transform="translate(1038,86)"><path d="M0,5 H8 L4,9 Z" fill="#000"/></g>
<rect x="1052" y="85" width="1" height="18" fill="#a0a0a0"/>
<g transform="translate(1059,86)"><rect x="0.5" y="0.5" width="11" height="13" fill="#f4f8ff" stroke="#3a5a90"/><rect x="1" y="1" width="11" height="2" fill="#5a90e0"/><path d="M3,5.5 H9 M3,7.5 H9 M3,9.5 H9 M3,11.5 H9" stroke="#7a8aa8"/></g>
<rect x="1079" y="85" width="1" height="18" fill="#a0a0a0"/>
<g transform="translate(1085,86)"><rect x="0.5" y="1.5" width="11" height="10" rx="1" fill="#f0c040" stroke="#a08020"/><rect x="4" y="0.5" width="4" height="3" fill="#f8f0d0" stroke="#a08020"/><rect x="2.5" y="5.5" width="13" height="10" fill="#fff" stroke="#4a6a9a"/><text x="9" y="14" font-family="Liberation Serif" font-size="8.5" text-anchor="middle" fill="#111">123</text></g>
<rect x="1107" y="85" width="1" height="18" fill="#a0a0a0"/>
<rect x="1110" y="83" width="22" height="21" fill="url(#chk)"/>
<path d="M1110.5,104 V83.5 H1132" stroke="#a0a0a0" fill="none"/>
<rect x="1133" y="83" width="22" height="21" fill="url(#chk)"/>
<path d="M1133.5,104 V83.5 H1155" stroke="#a0a0a0" fill="none"/>
<g transform="translate(1114,86)"><path d="M1,1.5 H15 M1,14.5 H15 M2,0 L0,1.5 L2,3 M14,0 L16,1.5 L14,3 M2,13 L0,14.5 L2,16 M14,13 L16,14.5 L14,16" stroke="#111" stroke-width="1.1" fill="none"/><rect x="3.5" y="4.5" width="9" height="7" fill="#e8f0fc" stroke="#5a7090"/><path d="M4,10 L7,8 L9,9 L12,6" stroke="#f02020"/><path d="M0,7.5 L1.5,6 M0,7.5 L1.5,9 M16,7.5 L14.5,6 M16,7.5 L14.5,9" stroke="#111"/></g>
<g transform="translate(1136,86)"><path d="M1.5,1 V15 M14.5,1 V15 M0,2 L1.5,0 L3,2 M0,14 L1.5,16 L3,14 M13,2 L14.5,0 L16,2 M13,14 L14.5,16 L16,14" stroke="#111" stroke-width="1.1" fill="none"/><rect x="4.5" y="3.5" width="7" height="9" fill="#e8f0fc" stroke="#5a7090"/><path d="M5,10 L7,8 L9,9 L11,6" stroke="#f02020"/><path d="M8,0 L6.5,1.5 M8,0 L9.5,1.5 M8,16 L6.5,14.5 M8,16 L9.5,14.5" stroke="#111"/></g>
<rect x="1159" y="85" width="1" height="18" fill="#a0a0a0"/>
<g transform="translate(1164,86)"><circle cx="6" cy="6" r="5.5" fill="url(#rg)" stroke="#6a6a6a" stroke-width="1.2"/><path d="M3,6 H9 M6,3 V9" stroke="#3a5a90" stroke-width="1.8"/><path d="M9.5,9.5 L13.5,13.5" stroke="#d8a020" stroke-width="2.8"/></g>
<g transform="translate(1187,86)"><circle cx="6" cy="6" r="5.5" fill="url(#rg)" stroke="#6a6a6a" stroke-width="1.2"/><path d="M3,6 H9" stroke="#3a5a90" stroke-width="1.8"/><path d="M9.5,9.5 L13.5,13.5" stroke="#d8a020" stroke-width="2.8"/></g>
<g transform="translate(1210,86)"><rect x="4.5" y="0.5" width="11" height="7" fill="#fff" stroke="#3a5a90"/><text x="10" y="6.5" font-family="Liberation Sans" font-weight="bold" font-size="6" text-anchor="middle" fill="#111">100</text><circle cx="4.5" cy="9.5" r="3.5" fill="url(#rg)" stroke="#6a6a6a"/><path d="M7,12 L10,14.5" stroke="#f0a030" stroke-width="2.2"/></g>
<rect x="1232" y="85" width="1" height="18" fill="#a0a0a0"/>
<g transform="translate(6,115)"><rect x="-0.5" y="-0.5" width="16" height="13" fill="#fff"/><rect x="0" y="0" width="4" height="5" fill="#ffa800"/><rect x="5.5" y="0" width="4" height="5" fill="#2ab020"/><rect x="11" y="0" width="4" height="5" fill="#3030e0"/><rect x="0" y="6.5" width="4" height="5" fill="#f02030"/><rect x="5.5" y="6.5" width="4" height="5" fill="#a000c0"/><rect x="11" y="6.5" width="4" height="5" fill="#40c8f0"/></g>
<g transform="translate(30,113)"><path d="M0,5 H8 L4,9 Z" fill="#000"/></g>
<g transform="translate(47,113)"><text x="5.5" y="13" font-family="Liberation Serif" font-weight="bold" font-size="15" text-anchor="middle" fill="#2a4f9a">A</text></g>
<rect x="66" y="112" width="1" height="18" fill="#a0a0a0"/>
<g transform="translate(72,114)"><rect x="0.5" y="0.5" width="7" height="7" fill="#c8c8c8" stroke="#6a7a90"/><rect x="8.5" y="7.5" width="6" height="6" fill="#b8bcc4" stroke="#3a4a60"/><rect x="3.5" y="2.5" width="8" height="8" fill="#f4c860" stroke="#3a4a60"/></g>
<g transform="translate(95,114)"><rect x="0.5" y="0.5" width="6" height="6" fill="#c8c8c8" stroke="#6a7a90"/><rect x="5.5" y="4.5" width="6" height="6" fill="#f4c860" stroke="#6a5a30"/><rect x="8.5" y="8.5" width="6" height="6" fill="#b8bcc4" stroke="#3a4a60"/></g></svg>
<div style="position:absolute;left:0;top:136px;width:1276px;height:581px;background:#fff;border-top:2px solid #6d6d6d;border-left:2px solid #8a8a8a;border-right:2px solid #f4f4f4"></div>
<svg width="1280" height="762" style="position:absolute;left:0;top:0" shape-rendering="crispEdges">
<polygon points="105.5,209.9 107.5,209.8 109.5,209.7 111.5,209.7 113.5,209.6 115.5,209.5 117.5,209.4 119.5,209.3 121.5,209.2 123.5,209.2 125.5,209.1 127.5,209.0 129.5,208.9 131.5,208.9 133.5,208.8 135.5,208.7 137.5,208.6 139.5,208.6 141.5,208.5 143.5,208.4 145.5,208.3 147.5,208.3 149.5,208.2 151.5,208.1 153.5,208.1 155.5,208.0 157.5,207.9 159.5,207.9 161.5,207.8 163.5,207.8 165.5,207.7 167.5,207.6 169.5,207.6 171.5,207.5 173.5,207.4 175.5,207.4 177.5,207.3 179.5,207.2 181.5,207.2 183.5,207.1 185.5,207.0 187.5,207.0 189.5,206.9 191.5,206.8 193.5,206.7 195.5,206.6 197.5,206.5 199.5,206.4 201.5,206.3 203.5,206.1 205.5,206.0 207.5,205.9 209.5,205.7 211.5,205.6 213.5,205.5 215.5,205.4 217.5,205.2 219.5,205.2 221.5,205.1 223.5,205.1 225.5,205.0 227.5,205.0 229.5,204.9 231.5,204.9 233.5,204.8 235.5,204.8 237.5,204.8 239.5,204.7 241.5,204.7 243.5,204.6 245.5,204.6 247.5,204.5 249.5,204.5 251.5,204.4 253.5,204.4 255.5,204.4 257.5,204.4 259.5,204.4 261.5,204.5 263.5,204.5 265.5,204.5 267.5,204.5 269.5,204.5 271.5,204.5 273.5,204.5 275.5,204.5 277.5,204.5 279.5,204.6 281.5,204.6 283.5,204.6 285.5,204.6 287.5,204.7 289.5,204.7 291.5,204.8 293.5,204.8 295.5,204.9 297.5,205.0 299.5,205.0 301.5,205.1 303.5,205.2 305.5,205.2 307.5,205.3 309.5,205.4 311.5,205.4 313.5,205.5 315.5,205.6 317.5,205.7 319.5,205.8 321.5,205.9 323.5,206.1 325.5,206.2 327.5,206.3 329.5,206.4 331.5,206.5 333.5,206.7 335.5,206.9 337.5,207.1 339.5,207.4 341.5,207.6 343.5,207.9 345.5,208.1 347.5,208.3 349.5,208.5 351.5,208.7 353.5,208.9 355.5,209.1 357.5,209.2 359.5,209.4 361.5,209.6 363.5,209.8 365.5,210.0 367.5,210.2 369.5,210.4 371.5,210.6 373.5,210.8 375.5,211.0 377.5,211.2 379.5,211.4 381.5,211.6 383.5,211.8 385.5,212.0 387.5,212.2 389.5,212.4 391.5,212.6 393.5,212.8 395.5,213.0 397.5,213.3 399.5,213.5 401.5,213.7 403.5,213.9 405.5,214.1 407.5,214.4 409.5,214.6 411.5,214.9 413.5,215.1 415.5,215.3 417.5,215.6 419.5,215.8 421.5,216.0 423.5,216.3 425.5,216.5 427.5,216.7 429.5,216.9 431.5,217.1 433.5,217.3 435.5,217.5 437.5,217.7 439.5,217.8 441.5,218.0 443.5,218.1 445.5,218.3 447.5,218.4 449.5,218.6 451.5,218.7 453.5,218.9 455.5,219.1 457.5,219.2 459.5,219.4 461.5,219.6 463.5,219.8 465.5,219.9 467.5,220.1 469.5,220.2 471.5,220.4 473.5,220.5 475.5,220.7 477.5,220.9 479.5,221.0 481.5,221.1 483.5,221.2 485.5,221.3 487.5,221.5 489.5,221.6 491.5,221.7 493.5,221.8 495.5,221.9 497.5,222.1 499.5,222.2 501.5,222.2 503.5,222.3 505.5,222.4 507.5,222.4 509.5,222.5 511.5,222.5 513.5,222.6 515.5,222.6 517.5,222.7 519.5,222.8 521.5,222.8 523.5,222.9 525.5,222.9 527.5,223.0 529.5,223.0 531.5,223.1 533.5,223.1 535.5,223.2 537.5,223.3 539.5,223.3 541.5,223.3 543.5,223.3 545.5,223.3 547.5,223.3 549.5,223.3 551.5,223.3 553.5,223.4 555.5,223.4 557.5,223.4 559.5,223.4 561.5,223.4 563.5,223.4 565.5,223.4 567.5,223.4 569.5,223.4 571.5,223.4 573.5,223.4 575.5,223.4 577.5,223.5 579.5,223.5 581.5,223.5 583.5,223.5 585.5,223.5 587.5,223.5 589.5,223.5 591.5,223.5 593.5,223.5 595.5,223.5 597.5,223.5 599.5,223.5 601.5,223.5 603.5,223.6 605.5,223.6 607.5,223.6 609.5,223.6 611.5,223.6 613.5,223.6 615.5,223.6 616.5,223.6 616.5,335.5 105.5,335.5" fill="#99d9ea" shape-rendering="auto"/>
<polygon points="105.5,321.3 107.5,321.1 109.5,321.0 111.5,320.8 113.5,320.7 115.5,320.5 117.5,320.4 119.5,320.2 121.5,320.1 123.5,319.9 125.5,319.8 127.5,319.6 129.5,319.5 131.5,319.4 133.5,319.2 135.5,319.1 137.5,319.0 139.5,318.9 141.5,318.8 143.5,318.6 145.5,318.5 147.5,318.4 149.5,318.4 151.5,318.4 153.5,318.4 155.5,318.4 157.5,318.4 159.5,318.4 161.5,318.4 163.5,318.4 165.5,318.4 167.5,318.4 169.5,318.4 171.5,318.4 173.5,318.4 175.5,318.4 177.5,318.4 179.5,318.4 181.5,318.6 183.5,318.7 185.5,318.9 187.5,319.0 189.5,319.1 191.5,319.3 193.5,319.4 195.5,319.7 197.5,320.1 199.5,320.5 201.5,320.9 203.5,321.3 205.5,321.7 207.5,322.1 209.5,322.5 211.5,323.1 213.5,323.7 215.5,324.2 217.5,324.8 219.5,325.4 221.5,326.0 223.5,326.6 225.5,327.2 227.5,327.9 229.5,328.6 231.5,329.3 233.5,330.0 235.5,330.7 237.5,331.4 239.5,332.1 241.5,332.8 243.5,333.5 245.5,334.2 247.5,334.9 249.5,335.6 251.5,336.4 253.5,337.3 255.5,338.1 257.5,339.0 259.5,339.8 261.5,340.7 263.5,341.5 265.5,342.4 267.5,343.2 269.5,344.1 271.5,344.9 273.5,345.8 275.5,346.7 277.5,347.8 279.5,348.9 281.5,350.0 283.5,351.1 285.5,352.2 287.5,353.3 289.5,354.4 291.5,355.5 293.5,356.6 295.5,357.7 297.5,358.8 299.5,359.9 301.5,361.0 303.5,362.1 305.5,363.2 307.5,364.1 309.5,365.1 311.5,366.0 313.5,366.9 315.5,367.9 317.5,368.8 319.5,369.8 321.5,370.7 323.5,371.6 325.5,372.6 327.5,373.5 329.5,374.4 331.5,375.3 333.5,376.1 335.5,377.0 337.5,377.8 339.5,378.7 341.5,379.6 343.5,380.4 345.5,381.3 347.5,382.1 349.5,383.0 351.5,383.9 353.5,384.6 355.5,385.3 357.5,386.1 359.5,386.8 361.5,387.5 363.5,388.3 365.5,389.0 367.5,389.7 369.5,390.5 371.5,391.2 373.5,391.9 375.5,392.6 377.5,393.0 379.5,393.4 381.5,393.8 383.5,394.2 385.5,394.6 387.5,395.0 389.5,395.4 391.5,395.6 393.5,395.7 395.5,395.9 397.5,396.0 399.5,396.1 401.5,396.2 403.5,396.3 405.5,396.4 407.5,396.3 409.5,396.3 411.5,396.2 413.5,396.1 415.5,396.0 417.5,395.9 419.5,395.8 421.5,395.4 423.5,395.0 425.5,394.6 427.5,394.2 429.5,393.8 431.5,393.4 433.5,393.0 435.5,392.6 437.5,392.2 439.5,391.8 441.5,391.3 443.5,390.8 445.5,390.2 447.5,389.7 449.5,389.2 451.5,388.7 453.5,388.1 455.5,387.6 457.5,387.1 459.5,386.5 461.5,386.0 463.5,385.5 465.5,384.8 467.5,384.1 469.5,383.5 471.5,382.8 473.5,382.1 475.5,381.5 477.5,380.8 479.5,380.2 481.5,379.5 483.5,378.8 485.5,378.2 487.5,377.5 489.5,377.0 491.5,376.5 493.5,375.9 495.5,375.4 497.5,374.8 499.5,374.3 501.5,373.8 503.5,373.2 505.5,372.7 507.5,372.2 509.5,371.6 511.5,371.2 513.5,370.9 515.5,370.5 517.5,370.2 519.5,369.9 521.5,369.5 523.5,369.2 525.5,368.9 527.5,368.5 529.5,368.2 531.5,367.9 533.5,367.5 535.5,367.4 537.5,367.3 539.5,367.2 541.5,367.1 543.5,367.0 545.5,366.9 547.5,366.8 549.5,366.7 551.5,366.6 553.5,366.4 555.5,366.3 557.5,366.3 559.5,366.3 561.5,366.4 563.5,366.4 565.5,366.5 567.5,366.5 569.5,366.6 571.5,366.7 573.5,366.8 575.5,367.1 577.5,367.3 579.5,367.6 581.5,367.9 583.5,368.1 585.5,368.4 587.5,368.6 589.5,368.9 591.5,369.2 593.5,369.4 595.5,369.7 597.5,370.1 599.5,370.6 601.5,371.1 603.5,371.7 605.5,372.2 607.5,372.7 609.5,373.2 611.5,373.7 613.5,374.2 615.5,374.7 616.5,375.0 616.5,335.5 105.5,335.5" fill="#ffaec9" shape-rendering="auto"/>
<path d="M105.5,157 V662 M135.5,157 V662 M156.5,157 V662 M173.5,157 V662 M186.5,157 V662 M198.5,157 V662 M208.5,157 V662 M216.5,157 V662 M224.5,157 V662 M275.5,157 V662 M305.5,157 V662 M327.5,157 V662 M343.5,157 V662 M357.5,157 V662 M368.5,157 V662 M378.5,157 V662 M387.5,157 V662 M394.5,157 V662 M446.5,157 V662 M475.5,157 V662 M497.5,157 V662 M513.5,157 V662 M527.5,157 V662 M538.5,157 V662 M548.5,157 V662 M557.5,157 V662 M564.5,157 V662 M616.5,157 V662 M646.5,157 V662 M667.5,157 V662 M683.5,157 V662 M697.5,157 V662 M708.5,157 V662 M718.5,157 V662 M727.5,157 V662 M735.5,157 V662 M786.5,157 V662 M816.5,157 V662 M837.5,157 V662 M853.5,157 V662 M867.5,157 V662 M878.5,157 V662 M888.5,157 V662 M897.5,157 V662 M905.5,157 V662 M956.5,157 V662 M986.5,157 V662 M1007.5,157 V662 M1024.5,157 V662 M1037.5,157 V662 M1049.5,157 V662 M1058.5,157 V662 M1067.5,157 V662 M1075.5,157 V662 M1126.5,157 V662 M1156.5,157 V662 M1177.5,157 V662 M1194.5,157 V662 M1207.5,157 V662 M1219.5,157 V662 M1229.5,157 V662 M1237.5,157 V662 M55,172.5 H1245 M55,189.5 H1245 M55,205.5 H1245 M55,221.5 H1245 M55,238.5 H1245 M55,254.5 H1245 M55,270.5 H1245 M55,287.5 H1245 M55,303.5 H1245 M55,319.5 H1245 M55,336.5 H1245 M55,352.5 H1245 M55,368.5 H1245 M55,385.5 H1245 M55,401.5 H1245 M55,417.5 H1245 M55,433.5 H1245 M55,450.5 H1245 M55,466.5 H1245 M55,482.5 H1245 M55,499.5 H1245 M55,515.5 H1245 M55,531.5 H1245 M55,548.5 H1245 M55,564.5 H1245 M55,580.5 H1245 M55,597.5 H1245 M55,613.5 H1245 M55,629.5 H1245 M55,646.5 H1245" stroke="#808080" stroke-width="1" stroke-dasharray="3 3" fill="none"/>
<rect x="54.5" y="156.5" width="1191" height="506" fill="none" stroke="#808080"/>
<path d="M54,336.5 H106 M617,336.5 H1245" stroke="#0000ff" stroke-width="1"/>
<path d="M106,336.5 H617" stroke="#99d9ea" stroke-width="1"/>
<path d="M54,335.5 H1245" stroke="#0000ff" stroke-width="1" stroke-dasharray="6 6"/>
<path d="M54,629 H1245" stroke="#0000ff" stroke-width="2" stroke-dasharray="6 6"/>
<path d="M105.5,209.9 V335.5 M616.5,223.6 V377.8" stroke="#000" stroke-width="1"/>
<path d="M54.0,210.30 L56.0,210.30 L58.0,210.30 L60.0,210.30 L62.0,210.30 L64.0,210.30 L66.0,210.30 L68.0,210.30 L70.0,210.30 L72.0,210.30 L74.0,210.30 L76.0,210.30 L78.0,210.30 L80.0,210.30 L82.0,210.30 L84.0,210.30 L86.0,210.30 L88.0,210.30 L90.0,210.30 L92.0,210.29 L94.0,210.27 L96.0,210.23 L98.0,210.18 L100.0,210.12 L102.0,210.05 L104.0,209.97 L106.0,209.88 L108.0,209.80 L110.0,209.72 L112.0,209.63 L114.0,209.55 L116.0,209.47 L118.0,209.39 L120.0,209.31 L122.0,209.23 L124.0,209.15 L126.0,209.07 L128.0,208.99 L130.0,208.92 L132.0,208.84 L134.0,208.76 L136.0,208.68 L138.0,208.61 L140.0,208.53 L142.0,208.46 L144.0,208.38 L146.0,208.31 L148.0,208.24 L150.0,208.18 L152.0,208.12 L154.0,208.05 L156.0,207.99 L158.0,207.93 L160.0,207.87 L162.0,207.81 L164.0,207.75 L166.0,207.68 L168.0,207.62 L170.0,207.56 L172.0,207.49 L174.0,207.43 L176.0,207.36 L178.0,207.29 L180.0,207.22 L182.0,207.15 L184.0,207.08 L186.0,207.00 L188.0,206.93 L190.0,206.86 L192.0,206.77 L194.0,206.68 L196.0,206.58 L198.0,206.47 L200.0,206.35 L202.0,206.22 L204.0,206.10 L206.0,205.97 L208.0,205.84 L210.0,205.71 L212.0,205.59 L214.0,205.47 L216.0,205.36 L218.0,205.26 L220.0,205.19 L222.0,205.12 L224.0,205.07 L226.0,205.02 L228.0,204.97 L230.0,204.93 L232.0,204.88 L234.0,204.83 L236.0,204.79 L238.0,204.74 L240.0,204.70 L242.0,204.65 L244.0,204.61 L246.0,204.56 L248.0,204.52 L250.0,204.48 L252.0,204.46 L254.0,204.44 L256.0,204.43 L258.0,204.44 L260.0,204.44 L262.0,204.45 L264.0,204.47 L266.0,204.48 L268.0,204.49 L270.0,204.50 L272.0,204.52 L274.0,204.53 L276.0,204.54 L278.0,204.55 L280.0,204.57 L282.0,204.58 L284.0,204.61 L286.0,204.64 L288.0,204.69 L290.0,204.74 L292.0,204.80 L294.0,204.87 L296.0,204.93 L298.0,205.00 L300.0,205.07 L302.0,205.13 L304.0,205.20 L306.0,205.27 L308.0,205.33 L310.0,205.40 L312.0,205.48 L314.0,205.55 L316.0,205.64 L318.0,205.74 L320.0,205.85 L322.0,205.97 L324.0,206.09 L326.0,206.21 L328.0,206.34 L330.0,206.47 L332.0,206.63 L334.0,206.80 L336.0,206.99 L338.0,207.21 L340.0,207.44 L342.0,207.68 L344.0,207.91 L346.0,208.14 L348.0,208.35 L350.0,208.55 L352.0,208.74 L354.0,208.92 L356.0,209.10 L358.0,209.29 L360.0,209.48 L362.0,209.68 L364.0,209.88 L366.0,210.08 L368.0,210.28 L370.0,210.49 L372.0,210.69 L374.0,210.89 L376.0,211.09 L378.0,211.29 L380.0,211.48 L382.0,211.67 L384.0,211.87 L386.0,212.06 L388.0,212.26 L390.0,212.46 L392.0,212.67 L394.0,212.88 L396.0,213.10 L398.0,213.32 L400.0,213.54 L402.0,213.76 L404.0,213.99 L406.0,214.21 L408.0,214.44 L410.0,214.68 L412.0,214.91 L414.0,215.15 L416.0,215.39 L418.0,215.62 L420.0,215.85 L422.0,216.08 L424.0,216.29 L426.0,216.51 L428.0,216.72 L430.0,216.92 L432.0,217.13 L434.0,217.33 L436.0,217.51 L438.0,217.69 L440.0,217.86 L442.0,218.02 L444.0,218.17 L446.0,218.32 L448.0,218.47 L450.0,218.62 L452.0,218.78 L454.0,218.95 L456.0,219.12 L458.0,219.29 L460.0,219.45 L462.0,219.62 L464.0,219.79 L466.0,219.95 L468.0,220.11 L470.0,220.27 L472.0,220.43 L474.0,220.58 L476.0,220.73 L478.0,220.87 L480.0,221.00 L482.0,221.13 L484.0,221.25 L486.0,221.37 L488.0,221.49 L490.0,221.61 L492.0,221.73 L494.0,221.84 L496.0,221.95 L498.0,222.06 L500.0,222.15 L502.0,222.23 L504.0,222.30 L506.0,222.37 L508.0,222.42 L510.0,222.48 L512.0,222.54 L514.0,222.59 L516.0,222.65 L518.0,222.71 L520.0,222.76 L522.0,222.82 L524.0,222.88 L526.0,222.93 L528.0,222.99 L530.0,223.05 L532.0,223.10 L534.0,223.15 L536.0,223.20 L538.0,223.24 L540.0,223.28 L542.0,223.30 L544.0,223.31 L546.0,223.33 L548.0,223.33 L550.0,223.34 L552.0,223.35 L554.0,223.36 L556.0,223.37 L558.0,223.37 L560.0,223.38 L562.0,223.39 L564.0,223.40 L566.0,223.41 L568.0,223.41 L570.0,223.42 L572.0,223.43 L574.0,223.44 L576.0,223.44 L578.0,223.45 L580.0,223.46 L582.0,223.47 L584.0,223.48 L586.0,223.48 L588.0,223.49 L590.0,223.50 L592.0,223.51 L594.0,223.52 L596.0,223.52 L598.0,223.53 L600.0,223.54 L602.0,223.55 L604.0,223.55 L606.0,223.56 L608.0,223.57 L610.0,223.58 L612.0,223.59 L614.0,223.61 L616.0,223.64 L618.0,223.67 L620.0,223.71 L622.0,223.75 L624.0,223.80 L626.0,223.84 L628.0,223.89 L630.0,223.93 L632.0,223.98 L634.0,224.03 L636.0,224.07 L638.0,224.12 L640.0,224.17 L642.0,224.21 L644.0,224.26 L646.0,224.32 L648.0,224.37 L650.0,224.44 L652.0,224.52 L654.0,224.61 L656.0,224.71 L658.0,224.81 L660.0,224.91 L662.0,225.02 L664.0,225.12 L666.0,225.22 L668.0,225.33 L670.0,225.44 L672.0,225.56 L674.0,225.69 L676.0,225.83 L678.0,225.98 L680.0,226.14 L682.0,226.30 L684.0,226.46 L686.0,226.62 L688.0,226.78 L690.0,226.94 L692.0,227.11 L694.0,227.28 L696.0,227.47 L698.0,227.67 L700.0,227.88 L702.0,228.10 L704.0,228.32 L706.0,228.55 L708.0,228.78 L710.0,229.01 L712.0,229.24 L714.0,229.48 L716.0,229.72 L718.0,229.97 L720.0,230.24 L722.0,230.53 L724.0,230.83 L726.0,231.15 L728.0,231.48 L730.0,231.81 L732.0,232.15 L734.0,232.48 L736.0,232.81 L738.0,233.15 L740.0,233.50 L742.0,233.85 L744.0,234.23 L746.0,234.63 L748.0,235.04 L750.0,235.46 L752.0,235.90 L754.0,236.33 L756.0,236.76 L758.0,237.20 L760.0,237.64 L762.0,238.07 L764.0,238.51 L766.0,238.96 L768.0,239.41 L770.0,239.87 L772.0,240.33 L774.0,240.80 L776.0,241.27 L778.0,241.74 L780.0,242.21 L782.0,242.68 L784.0,243.15 L786.0,243.63 L788.0,244.12 L790.0,244.62 L792.0,245.13 L794.0,245.66 L796.0,246.21 L798.0,246.76 L800.0,247.31 L802.0,247.87 L804.0,248.42 L806.0,248.98 L808.0,249.53 L810.0,250.09 L812.0,250.66 L814.0,251.22 L816.0,251.79 L818.0,252.37 L820.0,252.95 L822.0,253.53 L824.0,254.12 L826.0,254.70 L828.0,255.28 L830.0,255.87 L832.0,256.45 L834.0,257.03 L836.0,257.62 L838.0,258.20 L840.0,258.78 L842.0,259.37 L844.0,259.95 L846.0,260.53 L848.0,261.11 L850.0,261.68 L852.0,262.26 L854.0,262.83 L856.0,263.39 L858.0,263.96 L860.0,264.52 L862.0,265.08 L864.0,265.65 L866.0,266.21 L868.0,266.77 L870.0,267.32 L872.0,267.87 L874.0,268.39 L876.0,268.91 L878.0,269.41 L880.0,269.90 L882.0,270.39 L884.0,270.87 L886.0,271.36 L888.0,271.84 L890.0,272.32 L892.0,272.81 L894.0,273.29 L896.0,273.76 L898.0,274.22 L900.0,274.68 L902.0,275.13 L904.0,275.58 L906.0,276.02 L908.0,276.47 L910.0,276.91 L912.0,277.36 L914.0,277.80 L916.0,278.24 L918.0,278.67 L920.0,279.10 L922.0,279.52 L924.0,279.93 L926.0,280.34 L928.0,280.74 L930.0,281.14 L932.0,281.55 L934.0,281.95 L936.0,282.35 L938.0,282.75 L940.0,283.16 L942.0,283.58 L944.0,284.01 L946.0,284.45 L948.0,284.91 L950.0,285.37 L952.0,285.84 L954.0,286.30 L956.0,286.77 L958.0,287.24 L960.0,287.71 L962.0,288.17 L964.0,288.63 L966.0,289.07 L968.0,289.49 L970.0,289.89 L972.0,290.28 L974.0,290.66 L976.0,291.04 L978.0,291.41 L980.0,291.78 L982.0,292.15 L984.0,292.52 L986.0,292.90 L988.0,293.27 L990.0,293.66 L992.0,294.04 L994.0,294.43 L996.0,294.83 L998.0,295.22 L1000.0,295.62 L1002.0,296.02 L1004.0,296.41 L1006.0,296.81 L1008.0,297.21 L1010.0,297.60 L1012.0,298.00 L1014.0,298.38 L1016.0,298.77 L1018.0,299.15 L1020.0,299.53 L1022.0,299.91 L1024.0,300.29 L1026.0,300.67 L1028.0,301.04 L1030.0,301.42 L1032.0,301.80 L1034.0,302.18 L1036.0,302.56 L1038.0,302.93 L1040.0,303.31 L1042.0,303.69 L1044.0,304.06 L1046.0,304.44 L1048.0,304.80 L1050.0,305.16 L1052.0,305.50 L1054.0,305.84 L1056.0,306.17 L1058.0,306.50 L1060.0,306.82 L1062.0,307.15 L1064.0,307.47 L1066.0,307.80 L1068.0,308.13 L1070.0,308.48 L1072.0,308.84 L1074.0,309.24 L1076.0,309.65 L1078.0,310.09 L1080.0,310.55 L1082.0,311.01 L1084.0,311.48 L1086.0,311.95 L1088.0,312.42 L1090.0,312.89 L1092.0,313.35 L1094.0,313.82 L1096.0,314.29 L1098.0,314.76 L1100.0,315.23 L1102.0,315.70 L1104.0,316.17 L1106.0,316.64 L1108.0,317.11 L1110.0,317.58 L1112.0,318.05 L1114.0,318.52 L1116.0,318.99 L1118.0,319.46 L1120.0,319.93 L1122.0,320.40 L1124.0,320.87 L1126.0,321.34 L1128.0,321.81 L1130.0,322.28 L1132.0,322.74 L1134.0,323.21 L1136.0,323.68 L1138.0,324.15 L1140.0,324.62 L1142.0,325.10 L1144.0,325.58 L1146.0,326.06 L1148.0,326.55 L1150.0,327.03 L1152.0,327.52 L1154.0,328.01 L1156.0,328.50 L1158.0,328.99 L1160.0,329.49 L1162.0,329.98 L1164.0,330.48 L1166.0,330.98 L1168.0,331.49 L1170.0,332.01 L1172.0,332.54 L1174.0,333.07 L1176.0,333.60 L1178.0,334.13 L1180.0,334.67 L1182.0,335.20 L1184.0,335.74 L1186.0,336.28 L1188.0,336.84 L1190.0,337.41 L1192.0,338.00 L1194.0,338.61 L1196.0,339.24 L1198.0,339.87 L1200.0,340.51 L1202.0,341.15 L1204.0,341.80 L1206.0,342.44 L1208.0,343.08 L1210.0,343.73 L1212.0,344.39 L1214.0,345.05 L1216.0,345.74 L1218.0,346.43 L1220.0,347.13 L1222.0,347.84 L1224.0,348.55 L1226.0,349.26 L1228.0,349.97 L1230.0,350.68 L1232.0,351.39 L1234.0,352.10 L1236.0,352.80 L1238.0,353.50 L1240.0,354.17 L1242.0,354.82 L1244.0,355.42 L1245.0,356.00" stroke="#0000ff" stroke-width="3" fill="none" shape-rendering="auto"/>
<path d="M54.0,321.10 L56.0,321.26 L58.0,321.41 L60.0,321.57 L62.0,321.72 L64.0,321.86 L66.0,321.97 L68.0,322.05 L70.0,322.10 L72.0,322.11 L74.0,322.10 L76.0,322.08 L78.0,322.05 L80.0,322.02 L82.0,321.99 L84.0,321.96 L86.0,321.92 L88.0,321.87 L90.0,321.82 L92.0,321.75 L94.0,321.68 L96.0,321.61 L98.0,321.54 L100.0,321.46 L102.0,321.37 L104.0,321.28 L106.0,321.17 L108.0,321.05 L110.0,320.91 L112.0,320.77 L114.0,320.62 L116.0,320.47 L118.0,320.32 L120.0,320.17 L122.0,320.02 L124.0,319.88 L126.0,319.73 L128.0,319.59 L130.0,319.46 L132.0,319.33 L134.0,319.21 L136.0,319.09 L138.0,318.97 L140.0,318.86 L142.0,318.74 L144.0,318.64 L146.0,318.55 L148.0,318.49 L150.0,318.44 L152.0,318.42 L154.0,318.41 L156.0,318.40 L158.0,318.40 L160.0,318.40 L162.0,318.40 L164.0,318.40 L166.0,318.40 L168.0,318.40 L170.0,318.40 L172.0,318.40 L174.0,318.41 L176.0,318.44 L178.0,318.48 L180.0,318.55 L182.0,318.65 L184.0,318.77 L186.0,318.90 L188.0,319.05 L190.0,319.21 L192.0,319.40 L194.0,319.64 L196.0,319.92 L198.0,320.26 L200.0,320.63 L202.0,321.02 L204.0,321.43 L206.0,321.86 L208.0,322.30 L210.0,322.78 L212.0,323.29 L214.0,323.84 L216.0,324.40 L218.0,324.98 L220.0,325.57 L222.0,326.17 L224.0,326.79 L226.0,327.43 L228.0,328.08 L230.0,328.76 L232.0,329.46 L234.0,330.16 L236.0,330.86 L238.0,331.57 L240.0,332.27 L242.0,332.98 L244.0,333.69 L246.0,334.41 L248.0,335.15 L250.0,335.91 L252.0,336.70 L254.0,337.52 L256.0,338.35 L258.0,339.19 L260.0,340.04 L262.0,340.89 L264.0,341.74 L266.0,342.59 L268.0,343.44 L270.0,344.31 L272.0,345.20 L274.0,346.13 L276.0,347.10 L278.0,348.13 L280.0,349.19 L282.0,350.27 L284.0,351.37 L286.0,352.47 L288.0,353.58 L290.0,354.68 L292.0,355.79 L294.0,356.89 L296.0,357.99 L298.0,359.09 L300.0,360.19 L302.0,361.26 L304.0,362.31 L306.0,363.32 L308.0,364.31 L310.0,365.28 L312.0,366.23 L314.0,367.17 L316.0,368.11 L318.0,369.05 L320.0,369.99 L322.0,370.93 L324.0,371.86 L326.0,372.78 L328.0,373.69 L330.0,374.58 L332.0,375.46 L334.0,376.33 L336.0,377.19 L338.0,378.05 L340.0,378.91 L342.0,379.77 L344.0,380.63 L346.0,381.48 L348.0,382.33 L350.0,383.15 L352.0,383.96 L354.0,384.74 L356.0,385.50 L358.0,386.25 L360.0,386.99 L362.0,387.72 L364.0,388.46 L366.0,389.19 L368.0,389.92 L370.0,390.63 L372.0,391.31 L374.0,391.94 L376.0,392.50 L378.0,393.00 L380.0,393.46 L382.0,393.88 L384.0,394.27 L386.0,394.65 L388.0,394.99 L390.0,395.28 L392.0,395.52 L394.0,395.71 L396.0,395.85 L398.0,395.97 L400.0,396.07 L402.0,396.16 L404.0,396.22 L406.0,396.25 L408.0,396.25 L410.0,396.21 L412.0,396.15 L414.0,396.05 L416.0,395.92 L418.0,395.73 L420.0,395.48 L422.0,395.18 L424.0,394.83 L426.0,394.46 L428.0,394.07 L430.0,393.68 L432.0,393.28 L434.0,392.88 L436.0,392.47 L438.0,392.04 L440.0,391.59 L442.0,391.12 L444.0,390.62 L446.0,390.10 L448.0,389.58 L450.0,389.05 L452.0,388.52 L454.0,387.99 L456.0,387.46 L458.0,386.92 L460.0,386.37 L462.0,385.80 L464.0,385.21 L466.0,384.59 L468.0,383.96 L470.0,383.30 L472.0,382.64 L474.0,381.98 L476.0,381.32 L478.0,380.66 L480.0,379.99 L482.0,379.34 L484.0,378.70 L486.0,378.07 L488.0,377.47 L490.0,376.90 L492.0,376.34 L494.0,375.79 L496.0,375.25 L498.0,374.71 L500.0,374.17 L502.0,373.64 L504.0,373.11 L506.0,372.59 L508.0,372.09 L510.0,371.63 L512.0,371.21 L514.0,370.82 L516.0,370.47 L518.0,370.12 L520.0,369.79 L522.0,369.45 L524.0,369.12 L526.0,368.79 L528.0,368.47 L530.0,368.17 L532.0,367.89 L534.0,367.65 L536.0,367.46 L538.0,367.31 L540.0,367.18 L542.0,367.06 L544.0,366.95 L546.0,366.85 L548.0,366.74 L550.0,366.64 L552.0,366.54 L554.0,366.46 L556.0,366.40 L558.0,366.38 L560.0,366.38 L562.0,366.41 L564.0,366.45 L566.0,366.51 L568.0,366.59 L570.0,366.68 L572.0,366.81 L574.0,366.97 L576.0,367.17 L578.0,367.41 L580.0,367.66 L582.0,367.92 L584.0,368.18 L586.0,368.45 L588.0,368.71 L590.0,368.99 L592.0,369.27 L594.0,369.59 L596.0,369.95 L598.0,370.35 L600.0,370.80 L602.0,371.29 L604.0,371.78 L606.0,372.29 L608.0,372.81 L610.0,373.33 L612.0,373.87 L614.0,374.44 L616.0,375.07 L618.0,375.76 L620.0,376.51 L622.0,377.31 L624.0,378.14 L626.0,378.98 L628.0,379.83 L630.0,380.69 L632.0,381.55 L634.0,382.43 L636.0,383.31 L638.0,384.20 L640.0,385.10 L642.0,386.00 L644.0,386.93 L646.0,387.88 L648.0,388.87 L650.0,389.90 L652.0,390.97 L654.0,392.05 L656.0,393.16 L658.0,394.29 L660.0,395.46 L662.0,396.68 L664.0,397.99 L666.0,399.36 L668.0,400.80 L670.0,402.27 L672.0,403.77 L674.0,405.28 L676.0,406.80 L678.0,408.33 L680.0,409.88 L682.0,411.45 L684.0,413.04 L686.0,414.63 L688.0,416.23 L690.0,417.85 L692.0,419.51 L694.0,421.22 L696.0,422.99 L698.0,424.81 L700.0,426.68 L702.0,428.57 L704.0,430.48 L706.0,432.38 L708.0,434.29 L710.0,436.19 L712.0,438.09 L714.0,439.98 L716.0,441.87 L718.0,443.76 L720.0,445.65 L722.0,447.55 L724.0,449.47 L726.0,451.42 L728.0,453.40 L730.0,455.41 L732.0,457.44 L734.0,459.47 L736.0,461.51 L738.0,463.54 L740.0,465.57 L742.0,467.58 L744.0,469.59 L746.0,471.59 L748.0,473.57 L750.0,475.54 L752.0,477.47 L754.0,479.36 L756.0,481.22 L758.0,483.04 L760.0,484.83 L762.0,486.57 L764.0,488.25 L766.0,489.85 L768.0,491.37 L770.0,492.83 L772.0,494.24 L774.0,495.62 L776.0,496.96 L778.0,498.27 L780.0,499.54 L782.0,500.77 L784.0,501.98 L786.0,503.17 L788.0,504.33 L790.0,505.45 L792.0,506.53 L794.0,507.58 L796.0,508.60 L798.0,509.58 L800.0,510.52 L802.0,511.41 L804.0,512.22 L806.0,512.97 L808.0,513.67 L810.0,514.32 L812.0,514.93 L814.0,515.48 L816.0,515.98 L818.0,516.42 L820.0,516.80 L822.0,517.14 L824.0,517.45 L826.0,517.72 L828.0,517.93 L830.0,518.09 L832.0,518.21 L834.0,518.29 L836.0,518.34 L838.0,518.37 L840.0,518.37 L842.0,518.34 L844.0,518.28 L846.0,518.20 L848.0,518.09 L850.0,517.97 L852.0,517.81 L854.0,517.63 L856.0,517.42 L858.0,517.18 L860.0,516.92 L862.0,516.65 L864.0,516.36 L866.0,516.05 L868.0,515.72 L870.0,515.37 L872.0,515.00 L874.0,514.63 L876.0,514.24 L878.0,513.85 L880.0,513.44 L882.0,513.02 L884.0,512.60 L886.0,512.17 L888.0,511.75 L890.0,511.34 L892.0,510.94 L894.0,510.55 L896.0,510.16 L898.0,509.77 L900.0,509.38 L902.0,508.99 L904.0,508.60 L906.0,508.20 L908.0,507.80 L910.0,507.40 L912.0,507.00 L914.0,506.60 L916.0,506.20 L918.0,505.80 L920.0,505.41 L922.0,505.03 L924.0,504.66 L926.0,504.30 L928.0,503.97 L930.0,503.65 L932.0,503.34 L934.0,503.04 L936.0,502.75 L938.0,502.47 L940.0,502.20 L942.0,501.93 L944.0,501.68 L946.0,501.43 L948.0,501.20 L950.0,500.99 L952.0,500.80 L954.0,500.63 L956.0,500.48 L958.0,500.33 L960.0,500.20 L962.0,500.07 L964.0,499.95 L966.0,499.84 L968.0,499.74 L970.0,499.65 L972.0,499.56 L974.0,499.49 L976.0,499.42 L978.0,499.37 L980.0,499.33 L982.0,499.30 L984.0,499.27 L986.0,499.26 L988.0,499.25 L990.0,499.26 L992.0,499.28 L994.0,499.31 L996.0,499.35 L998.0,499.41 L1000.0,499.49 L1002.0,499.59 L1004.0,499.71 L1006.0,499.84 L1008.0,499.98 L1010.0,500.13 L1012.0,500.28 L1014.0,500.43 L1016.0,500.58 L1018.0,500.75 L1020.0,500.91 L1022.0,501.09 L1024.0,501.29 L1026.0,501.52 L1028.0,501.77 L1030.0,502.04 L1032.0,502.32 L1034.0,502.62 L1036.0,502.94 L1038.0,503.28 L1040.0,503.64 L1042.0,504.01 L1044.0,504.40 L1046.0,504.79 L1048.0,505.18 L1050.0,505.57 L1052.0,505.95 L1054.0,506.32 L1056.0,506.71 L1058.0,507.11 L1060.0,507.55 L1062.0,508.02 L1064.0,508.53 L1066.0,509.05 L1068.0,509.60 L1070.0,510.14 L1072.0,510.69 L1074.0,511.25 L1076.0,511.83 L1078.0,512.45 L1080.0,513.10 L1082.0,513.81 L1084.0,514.56 L1086.0,515.34 L1088.0,516.13 L1090.0,516.93 L1092.0,517.74 L1094.0,518.55 L1096.0,519.38 L1098.0,520.24 L1100.0,521.13 L1102.0,522.06 L1104.0,523.02 L1106.0,524.01 L1108.0,525.00 L1110.0,526.00 L1112.0,527.01 L1114.0,528.04 L1116.0,529.11 L1118.0,530.23 L1120.0,531.43 L1122.0,532.71 L1124.0,534.04 L1126.0,535.42 L1128.0,536.81 L1130.0,538.21 L1132.0,539.61 L1134.0,541.02 L1136.0,542.44 L1138.0,543.87 L1140.0,545.32 L1142.0,546.78 L1144.0,548.26 L1146.0,549.75 L1148.0,551.24 L1150.0,552.73 L1152.0,554.23 L1154.0,555.73 L1156.0,557.25 L1158.0,558.79 L1160.0,560.35 L1162.0,561.93 L1164.0,563.52 L1166.0,565.13 L1168.0,566.74 L1170.0,568.35 L1172.0,569.96 L1174.0,571.57 L1176.0,573.18 L1178.0,574.79 L1180.0,576.39 L1182.0,577.99 L1184.0,579.59 L1186.0,581.18 L1188.0,582.78 L1190.0,584.38 L1192.0,585.98 L1194.0,587.60 L1196.0,589.25 L1198.0,590.93 L1200.0,592.65 L1202.0,594.40 L1204.0,596.18 L1206.0,597.97 L1208.0,599.77 L1210.0,601.57 L1212.0,603.39 L1214.0,605.25 L1216.0,607.17 L1218.0,609.18 L1220.0,611.27 L1222.0,613.43 L1224.0,615.65 L1226.0,617.89 L1228.0,620.15 L1230.0,622.43 L1232.0,624.73 L1234.0,627.05 L1236.0,629.40 L1238.0,631.73 L1240.0,634.02 L1242.0,636.19 L1244.0,638.24 L1245.0,640.20" stroke="#ff0000" stroke-width="3" fill="none" shape-rendering="auto"/>
<path d="M1229,332 L1241,332 L1236,350 L1234,350 Z" fill="#ff0000" shape-rendering="auto"/>
<path d="M1184.5,629 V595" stroke="#ff0000" stroke-width="2"/>
<path d="M1180,601 L1189,601 L1184.5,580 Z" fill="#ff0000" shape-rendering="auto"/>
</svg>
<div class="t b" style="left:0;width:52px;text-align:right;top:152px;font-size:10.3px;color:#0000ff">110.000</div>
<div class="t b" style="left:0;width:52px;text-align:right;top:168px;font-size:10.3px;color:#0000ff">100.000</div>
<div class="t b" style="left:0;width:52px;text-align:right;top:185px;font-size:10.3px;color:#0000ff">90.000</div>
<div class="t b" style="left:0;width:52px;text-align:right;top:201px;font-size:10.3px;color:#0000ff">80.000</div>
<div class="t b" style="left:0;width:52px;text-align:right;top:217px;font-size:10.3px;color:#0000ff">70.000</div>
<div class="t b" style="left:0;width:52px;text-align:right;top:234px;font-size:10.3px;color:#0000ff">60.000</div>
<div class="t b" style="left:0;width:52px;text-align:right;top:250px;font-size:10.3px;color:#0000ff">50.000</div>
<div class="t b" style="left:0;width:52px;text-align:right;top:266px;font-size:10.3px;color:#0000ff">40.000</div>
<div class="t b" style="left:0;width:52px;text-align:right;top:283px;font-size:10.3px;color:#0000ff">30.000</div>
<div class="t b" style="left:0;width:52px;text-align:right;top:299px;font-size:10.3px;color:#0000ff">20.000</div>
<div class="t b" style="left:0;width:52px;text-align:right;top:315px;font-size:10.3px;color:#0000ff">10.000</div>
<div class="t b" style="left:0;width:52px;text-align:right;top:332px;font-size:10.3px;color:#0000ff">0.000</div>
<div class="t b" style="left:0;width:52px;text-align:right;top:348px;font-size:10.3px;color:#0000ff">-10.000</div>
<div class="t b" style="left:0;width:52px;text-align:right;top:364px;font-size:10.3px;color:#0000ff">-20.000</div>
<div class="t b" style="left:0;width:52px;text-align:right;top:381px;font-size:10.3px;color:#0000ff">-30.000</div>
<div class="t b" style="left:0;width:52px;text-align:right;top:397px;font-size:10.3px;color:#0000ff">-40.000</div>
<div class="t b" style="left:0;width:52px;text-align:right;top:413px;font-size:10.3px;color:#0000ff">-50.000</div>
<div class="t b" style="left:0;width:52px;text-align:right;top:429px;font-size:10.3px;color:#0000ff">-60.000</div>
<div class="t b" style="left:0;width:52px;text-align:right;top:446px;font-size:10.3px;color:#0000ff">-70.000</div>
<div class="t b" style="left:0;width:52px;text-align:right;top:462px;font-size:10.3px;color:#0000ff">-80.000</div>
<div class="t b" style="left:0;width:52px;text-align:right;top:478px;font-size:10.3px;color:#0000ff">-90.000</div>
<div class="t b" style="left:0;width:52px;text-align:right;top:495px;font-size:10.3px;color:#0000ff">-100.000</div>
<div class="t b" style="left:0;width:52px;text-align:right;top:511px;font-size:10.3px;color:#0000ff">-110.000</div>
<div class="t b" style="left:0;width:52px;text-align:right;top:527px;font-size:10.3px;color:#0000ff">-120.000</div>
<div class="t b" style="left:0;width:52px;text-align:right;top:544px;font-size:10.3px;color:#0000ff">-130.000</div>
<div class="t b" style="left:0;width:52px;text-align:right;top:560px;font-size:10.3px;color:#0000ff">-140.000</div>
<div class="t b" style="left:0;width:52px;text-align:right;top:576px;font-size:10.3px;color:#0000ff">-150.000</div>
<div class="t b" style="left:0;width:52px;text-align:right;top:593px;font-size:10.3px;color:#0000ff">-160.000</div>
<div class="t b" style="left:0;width:52px;text-align:right;top:609px;font-size:10.3px;color:#0000ff">-170.000</div>
<div class="t b" style="left:0;width:52px;text-align:right;top:625px;font-size:10.3px;color:#0000ff">-180.000</div>
<div class="t b" style="left:0;width:52px;text-align:right;top:642px;font-size:10.3px;color:#0000ff">-190.000</div>
<div class="t b" style="left:0;width:52px;text-align:right;top:658px;font-size:10.3px;color:#0000ff">-200.000</div>
<div class="t b" style="left:54px;top:666px;font-size:10.3px;color:#0000ff">10</div>
<div class="t b" style="left:194px;width:60px;text-align:center;top:666px;font-size:10.3px;color:#0000ff">100</div>
<div class="t b" style="left:364px;width:60px;text-align:center;top:666px;font-size:10.3px;color:#0000ff">1K</div>
<div class="t b" style="left:534px;width:60px;text-align:center;top:666px;font-size:10.3px;color:#0000ff">10K</div>
<div class="t b" style="left:705px;width:60px;text-align:center;top:666px;font-size:10.3px;color:#0000ff">100K</div>
<div class="t b" style="left:875px;width:60px;text-align:center;top:666px;font-size:10.3px;color:#0000ff">1M</div>
<div class="t b" style="left:1045px;width:60px;text-align:center;top:666px;font-size:10.3px;color:#0000ff">10M</div>
<div class="t b" style="left:1215px;width:60px;text-align:center;top:666px;font-size:10.3px;color:#0000ff">100M</div>
<div class="t b" style="left:54px;top:679px;font-size:10.8px;color:#0000ff;text-decoration:underline">dB(LoopGain)</div>
<div class="t b" style="left:233px;top:679px;font-size:10.8px;color:#ff0000">ph(LoopGain) (Degrees)</div>
<div class="t b" style="left:583px;top:693px;font-size:10.8px;color:#0000ff">F (Hz)</div>
<div class="t b" style="left:597px;top:145px;font-size:10.4px;color:#0000ff">Sony_TA-F670ES.CIR</div>
<div style="position:absolute;left:761px;top:194px;width:458px;height:34px;background:#fff;border:1px solid #000"></div>
<div class="t" style="left:763px;top:197px;font-size:27px;letter-spacing:0.1px;color:#008000;transform:scaleY(1.042);transform-origin:0 0">Gain Margin=10.299 FG=86.782MEG</div>
<div style="position:absolute;left:664px;top:566px;width:473px;height:34px;background:#fff;border:1px solid #000"></div>
<div style="position:absolute;left:664px;top:564px;width:6px;height:3px;background:#000"></div>
<svg width="8" height="8" style="position:absolute;left:1135px;top:564px"><path d="M1.5,1 V3 L2.5,4 L5,1.5" stroke="#000" fill="none" stroke-width="0.7"/></svg>
<div class="t" style="left:666px;top:569px;font-size:27px;letter-spacing:0.07px;color:#ff0000;transform:scaleY(1.05);transform-origin:0 0">Phase Margin=30.626 FP=43.806MEG</div>
<div style="position:absolute;left:0;top:716px;width:1276px;height:18px;background:#f0f0f0;border-left:2px solid #8a8a8a"></div>
<div style="position:absolute;left:136px;top:716px;width:1121px;height:1px;background:#000"></div>
<div style="position:absolute;left:1257px;top:716px;width:17px;height:7px;background:#f0f0f0;border:1px solid #fff;border-right-color:#808080;border-bottom-color:#808080"></div>
<div style="position:absolute;left:7px;top:716px;width:83px;height:17px;background:#a0a0a0"></div>
<div style="position:absolute;left:8px;top:717px;width:15px;height:15px;background:#f0f0f0;border:1px solid #fff;border-right-color:#696969;border-bottom-color:#696969"></div>
<div style="position:absolute;left:25px;top:717px;width:15px;height:15px;background:#f0f0f0;border:1px solid #fff;border-right-color:#696969;border-bottom-color:#696969"></div>
<div style="position:absolute;left:41px;top:717px;width:15px;height:15px;background:#f0f0f0;border:1px solid #fff;border-right-color:#696969;border-bottom-color:#696969"></div>
<div style="position:absolute;left:57px;top:717px;width:15px;height:15px;background:#f0f0f0;border:1px solid #fff;border-right-color:#696969;border-bottom-color:#696969"></div>
<div style="position:absolute;left:73px;top:717px;width:15px;height:15px;background:#f0f0f0;border:1px solid #fff;border-right-color:#696969;border-bottom-color:#696969"></div>
<svg width="90" height="16" style="position:absolute;left:0;top:717px" shape-rendering="crispEdges"><rect x="14" y="9" width="5" height="1" fill="#000"/><rect x="15" y="10" width="3" height="1" fill="#000"/><rect x="16" y="11" width="1" height="1" fill="#000"/><rect x="28" y="4" width="1" height="8" fill="#000"/><path d="M35,4 L30,8 L35,12 Z" fill="#000"/><path d="M51,4 L46,8 L51,12 Z" fill="#000"/><path d="M62,4 L67,8 L62,12 Z" fill="#000"/><path d="M78,4 L83,8 L78,12 Z" fill="#000"/><rect x="84" y="4" width="1" height="8" fill="#000"/></svg>
<svg width="50" height="18" style="position:absolute;left:89px;top:716px"><path d="M0.5,0 L8,16.5 H40 L47.5,0" fill="#fff" stroke="#000" stroke-width="1"/></svg>
<div class="t" style="left:97px;top:718px;font-size:12px;font-weight:bold;color:#000">Open</div>
<div style="position:absolute;left:0;top:734px;width:1276px;height:20px;background:#f0f0f0"></div>
<div style="position:absolute;left:0px;top:737px;width:124px;height:17px;border-top:1px solid #a0a0a0;border-left:1px solid #a0a0a0"></div>
<div style="position:absolute;left:127px;top:737px;width:916px;height:17px;border-top:1px solid #a0a0a0;border-left:1px solid #a0a0a0"></div>
<div style="position:absolute;left:1046px;top:737px;width:121px;height:17px;border-top:1px solid #a0a0a0;border-left:1px solid #a0a0a0"></div>
<div style="position:absolute;left:1170px;top:737px;width:86px;height:17px;border-top:1px solid #a0a0a0;border-left:1px solid #a0a0a0"></div>
<div class="t" style="left:2px;top:740px;font-size:12px;color:#000">Select Mode</div>
<div class="t" style="left:129px;top:740px;font-size:12.3px;color:#000">Double-click in the window for more options.</div>
<svg width="14" height="13" style="position:absolute;left:1262px;top:741px"><path d="M13,2 L2,13 M13,6 L6,13 M13,10 L10,13" stroke="#a0a0a0" stroke-width="1.2"/></svg>
<div style="position:absolute;left:0;top:754px;width:1280px;height:8px;background:linear-gradient(#3c4650 0,#3c4650 1px,#8eaecf 1px,#a6c0dc 3px,#8aa8c8 6px,#111 6px,#111 7px,#d8dde2 7px)"></div>
</body></html>
